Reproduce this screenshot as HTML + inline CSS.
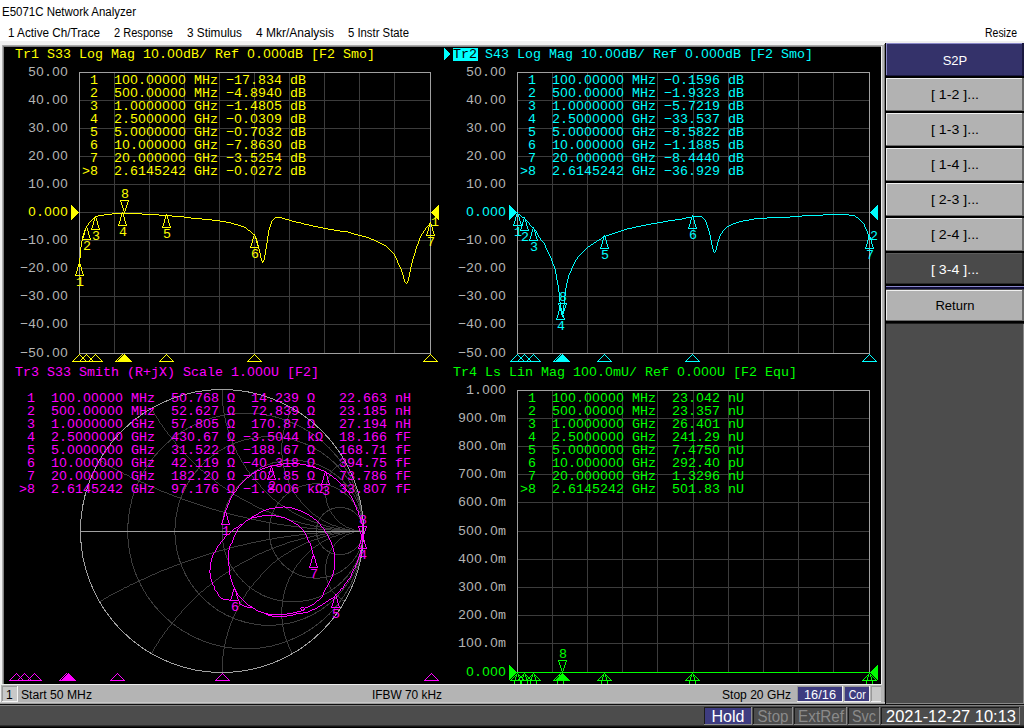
<!DOCTYPE html>
<html><head><meta charset="utf-8"><title>E5071C Network Analyzer</title>
<style>html,body{margin:0;padding:0;background:#fff;overflow:hidden}svg{display:block}text{font-family:'Liberation Mono',monospace;font-size:13.333px;white-space:pre}.s{font-family:"Liberation Sans",sans-serif;white-space:pre}.d{font-family:"Liberation Sans",sans-serif}.cr{shape-rendering:crispEdges}</style></head><body>
<svg width="1024" height="728" viewBox="0 0 1024 728">
<rect width="1024" height="728" fill="#ffffff"/>
<text class="s" x="2" y="16" fill="#000" style="font-size:12px" textLength="134" lengthAdjust="spacingAndGlyphs">E5071C Network Analyzer</text>
<text class="s" x="8" y="37" fill="#000" style="font-size:12px" textLength="92" lengthAdjust="spacingAndGlyphs">1 Active Ch/Trace</text>
<text class="s" x="114" y="37" fill="#000" style="font-size:12px" textLength="59" lengthAdjust="spacingAndGlyphs">2 Response</text>
<text class="s" x="187" y="37" fill="#000" style="font-size:12px" textLength="55" lengthAdjust="spacingAndGlyphs">3 Stimulus</text>
<text class="s" x="256" y="37" fill="#000" style="font-size:12px" textLength="78" lengthAdjust="spacingAndGlyphs">4 Mkr/Analysis</text>
<text class="s" x="348" y="37" fill="#000" style="font-size:12px" textLength="61" lengthAdjust="spacingAndGlyphs">5 Instr State</text>
<text class="s" x="985" y="37" fill="#000" style="font-size:12px" textLength="32" lengthAdjust="spacingAndGlyphs">Resize</text>
<g class="cr">
<rect x="0" y="41" width="1024" height="4" fill="#f0f0f0"/>
<rect x="0" y="45" width="2" height="659" fill="#f0f0f0"/>
<rect x="2" y="45" width="882" height="1" fill="#a8a8a8"/>
<rect x="2" y="45" width="1" height="659" fill="#b0b0b0"/>
<rect x="3" y="46" width="879" height="1" fill="#808080"/>
<rect x="3" y="46" width="1" height="658" fill="#808080"/>
<rect x="4" y="47" width="877" height="637" fill="#000"/>
<rect x="881" y="46" width="1" height="657" fill="#f0f0f0"/>
<rect x="882" y="45" width="2" height="659" fill="#b4b4b4"/>
<rect x="884" y="44" width="1" height="660" fill="#7c7c7c"/>
<rect x="885" y="43" width="1" height="662" fill="#000"/>
</g>
<g class="cr">
<rect x="114" y="72" width="1" height="282" fill="#3c3c3c"/>
<rect x="149" y="72" width="1" height="282" fill="#3c3c3c"/>
<rect x="184" y="72" width="1" height="282" fill="#3c3c3c"/>
<rect x="219" y="72" width="1" height="282" fill="#3c3c3c"/>
<rect x="254" y="72" width="1" height="282" fill="#3c3c3c"/>
<rect x="289" y="72" width="1" height="282" fill="#3c3c3c"/>
<rect x="324" y="72" width="1" height="282" fill="#3c3c3c"/>
<rect x="359" y="72" width="1" height="282" fill="#3c3c3c"/>
<rect x="394" y="72" width="1" height="282" fill="#3c3c3c"/>
<rect x="79" y="100" width="352" height="1" fill="#3c3c3c"/>
<rect x="79" y="128" width="352" height="1" fill="#3c3c3c"/>
<rect x="79" y="156" width="352" height="1" fill="#3c3c3c"/>
<rect x="79" y="184" width="352" height="1" fill="#3c3c3c"/>
<rect x="79" y="212" width="352" height="1" fill="#3c3c3c"/>
<rect x="79" y="240" width="352" height="1" fill="#3c3c3c"/>
<rect x="79" y="268" width="352" height="1" fill="#3c3c3c"/>
<rect x="79" y="296" width="352" height="1" fill="#3c3c3c"/>
<rect x="79" y="324" width="352" height="1" fill="#3c3c3c"/>
<rect x="79" y="72" width="352" height="1" fill="#a0a0a0"/>
<rect x="79" y="353" width="352" height="1" fill="#a0a0a0"/>
<rect x="79" y="72" width="1" height="282" fill="#a0a0a0"/>
<rect x="430" y="72" width="1" height="282" fill="#a0a0a0"/>
</g>
<text y="76" fill="#b4b4b4" ><tspan x="28">5</tspan><tspan class="d" x="36.3">0</tspan><tspan x="44">.</tspan><tspan class="d" x="52.3 60.3">00</tspan></text>
<text y="104" fill="#b4b4b4" ><tspan x="28">4</tspan><tspan class="d" x="36.3">0</tspan><tspan x="44">.</tspan><tspan class="d" x="52.3 60.3">00</tspan></text>
<text y="132" fill="#b4b4b4" ><tspan x="28">3</tspan><tspan class="d" x="36.3">0</tspan><tspan x="44">.</tspan><tspan class="d" x="52.3 60.3">00</tspan></text>
<text y="160" fill="#b4b4b4" ><tspan x="28">2</tspan><tspan class="d" x="36.3">0</tspan><tspan x="44">.</tspan><tspan class="d" x="52.3 60.3">00</tspan></text>
<text y="188" fill="#b4b4b4" ><tspan x="28">1</tspan><tspan class="d" x="36.3">0</tspan><tspan x="44">.</tspan><tspan class="d" x="52.3 60.3">00</tspan></text>
<text y="216" fill="#ffff00" ><tspan class="d" x="28.3">0</tspan><tspan x="36">.</tspan><tspan class="d" x="44.3 52.3 60.3">000</tspan></text>
<text y="244" fill="#b4b4b4" ><tspan x="20">−1</tspan><tspan class="d" x="36.3">0</tspan><tspan x="44">.</tspan><tspan class="d" x="52.3 60.3">00</tspan></text>
<text y="272" fill="#b4b4b4" ><tspan x="20">−2</tspan><tspan class="d" x="36.3">0</tspan><tspan x="44">.</tspan><tspan class="d" x="52.3 60.3">00</tspan></text>
<text y="300" fill="#b4b4b4" ><tspan x="20">−3</tspan><tspan class="d" x="36.3">0</tspan><tspan x="44">.</tspan><tspan class="d" x="52.3 60.3">00</tspan></text>
<text y="328" fill="#b4b4b4" ><tspan x="20">−4</tspan><tspan class="d" x="36.3">0</tspan><tspan x="44">.</tspan><tspan class="d" x="52.3 60.3">00</tspan></text>
<text y="357" fill="#b4b4b4" ><tspan x="20">−5</tspan><tspan class="d" x="36.3">0</tspan><tspan x="44">.</tspan><tspan class="d" x="52.3 60.3">00</tspan></text>
<text y="58" fill="#ffff00" ><tspan x="15">Tr1 S33 Log Mag 1</tspan><tspan class="d" x="151.3">0</tspan><tspan x="159">.</tspan><tspan class="d" x="167.3 175.3">00</tspan><tspan x="183">dB/ Ref </tspan><tspan class="d" x="247.3">0</tspan><tspan x="255">.</tspan><tspan class="d" x="263.3 271.3 279.3">000</tspan><tspan x="287">dB [F2 Smo]</tspan></text>
<text y="84" fill="#ffff00" ><tspan x="82"> 1  1</tspan><tspan class="d" x="122.3 130.3">00</tspan><tspan x="138">.</tspan><tspan class="d" x="146.3 154.3 162.3 170.3 178.3">00000</tspan><tspan x="186"> MHz −17.834 dB</tspan></text>
<text y="97" fill="#ffff00" ><tspan x="82"> 2  5</tspan><tspan class="d" x="122.3 130.3">00</tspan><tspan x="138">.</tspan><tspan class="d" x="146.3 154.3 162.3 170.3 178.3">00000</tspan><tspan x="186"> MHz −4.894</tspan><tspan class="d" x="274.3">0</tspan><tspan x="282"> dB</tspan></text>
<text y="110" fill="#ffff00" ><tspan x="82"> 3  1.</tspan><tspan class="d" x="130.3 138.3 146.3 154.3 162.3 170.3 178.3">0000000</tspan><tspan x="186"> GHz −1.48</tspan><tspan class="d" x="266.3">0</tspan><tspan x="274">5 dB</tspan></text>
<text y="123" fill="#ffff00" ><tspan x="82"> 4  2.5</tspan><tspan class="d" x="138.3 146.3 154.3 162.3 170.3 178.3">000000</tspan><tspan x="186"> GHz −</tspan><tspan class="d" x="234.3">0</tspan><tspan x="242">.</tspan><tspan class="d" x="250.3">0</tspan><tspan x="258">3</tspan><tspan class="d" x="266.3">0</tspan><tspan x="274">9 dB</tspan></text>
<text y="136" fill="#ffff00" ><tspan x="82"> 5  5.</tspan><tspan class="d" x="130.3 138.3 146.3 154.3 162.3 170.3 178.3">0000000</tspan><tspan x="186"> GHz −</tspan><tspan class="d" x="234.3">0</tspan><tspan x="242">.7</tspan><tspan class="d" x="258.3">0</tspan><tspan x="266">32 dB</tspan></text>
<text y="149" fill="#ffff00" ><tspan x="82"> 6  1</tspan><tspan class="d" x="122.3">0</tspan><tspan x="130">.</tspan><tspan class="d" x="138.3 146.3 154.3 162.3 170.3 178.3">000000</tspan><tspan x="186"> GHz −7.863</tspan><tspan class="d" x="274.3">0</tspan><tspan x="282"> dB</tspan></text>
<text y="162" fill="#ffff00" ><tspan x="82"> 7  2</tspan><tspan class="d" x="122.3">0</tspan><tspan x="130">.</tspan><tspan class="d" x="138.3 146.3 154.3 162.3 170.3 178.3">000000</tspan><tspan x="186"> GHz −3.5254 dB</tspan></text>
<text y="175" fill="#ffff00" ><tspan x="82">&gt;8  2.6145242 GHz −</tspan><tspan class="d" x="234.3">0</tspan><tspan x="242">.</tspan><tspan class="d" x="250.3">0</tspan><tspan x="258">272 dB</tspan></text>
<g class="cr">
<path d="M112 213.5h30M104 214.5h8M142 214.5h17M98 215.5h6M159 215.5h13M96 216.5h2M172 216.5h12M94 217.5h2M184 217.5h7M275 217.5h7M93 218.5h1M191 218.5h11M274 218.5h1M282 218.5h3M92 219.5h1M202 219.5h10M273 219.5h1M285 219.5h4M91 220.5h1M212 220.5h8M272 220.5h1M289 220.5h3M90 221.5h1M220 221.5h6M271 221.5h1M292 221.5h4M89 222.5h1M226 222.5h5M271 222.5h1M296 222.5h5M430 222.5h1M88 223.5h1M231 223.5h3M271 223.5h1M301 223.5h3M429 223.5h1M88 224.5h1M234 224.5h4M270 224.5h1M304 224.5h5M429 224.5h1M87 225.5h1M238 225.5h3M270 225.5h1M309 225.5h4M428 225.5h1M86 226.5h1M241 226.5h3M270 226.5h1M313 226.5h5M427 226.5h1M86 227.5h1M244 227.5h2M269 227.5h1M318 227.5h5M426 227.5h1M85 228.5h1M246 228.5h1M269 228.5h1M323 228.5h5M425 228.5h1M85 229.5h1M247 229.5h1M269 229.5h1M328 229.5h6M425 229.5h1M84 230.5h1M248 230.5h2M268 230.5h1M334 230.5h6M424 230.5h1M84 231.5h1M250 231.5h1M268 231.5h1M340 231.5h8M423 231.5h1M84 232.5h1M251 232.5h1M268 232.5h1M348 232.5h3M423 232.5h1M83 233.5h1M252 233.5h1M268 233.5h1M351 233.5h3M422 233.5h1M83 234.5h1M253 234.5h1M268 234.5h1M354 234.5h4M421 234.5h1M83 235.5h1M254 235.5h1M268 235.5h1M358 235.5h4M421 235.5h1M82 236.5h1M255 236.5h1M267 236.5h1M362 236.5h4M420 236.5h1M82 237.5h1M255 237.5h1M267 237.5h1M366 237.5h3M420 237.5h1M82 238.5h1M256 238.5h1M267 238.5h1M369 238.5h2M419 238.5h1M82 239.5h1M256 239.5h1M267 239.5h1M371 239.5h3M419 239.5h1M82 240.5h1M256 240.5h1M267 240.5h1M374 240.5h2M419 240.5h1M81 241.5h1M257 241.5h1M267 241.5h1M376 241.5h2M418 241.5h1M81 242.5h1M257 242.5h1M267 242.5h1M378 242.5h2M418 242.5h1M81 243.5h1M257 243.5h1M266 243.5h1M380 243.5h2M418 243.5h1M81 244.5h1M257 244.5h1M266 244.5h1M382 244.5h2M417 244.5h1M81 245.5h1M258 245.5h1M266 245.5h1M384 245.5h2M417 245.5h1M81 246.5h1M258 246.5h1M266 246.5h1M386 246.5h1M416 246.5h1M80 247.5h1M258 247.5h1M266 247.5h1M387 247.5h1M416 247.5h1M80 248.5h1M258 248.5h1M266 248.5h1M388 248.5h1M416 248.5h1M80 249.5h1M259 249.5h1M265 249.5h1M389 249.5h1M415 249.5h1M80 250.5h1M259 250.5h1M265 250.5h1M390 250.5h1M415 250.5h1M80 251.5h1M259 251.5h1M265 251.5h1M391 251.5h1M415 251.5h1M80 252.5h1M259 252.5h1M265 252.5h1M392 252.5h1M415 252.5h1M80 253.5h1M260 253.5h1M265 253.5h1M393 253.5h1M414 253.5h1M80 254.5h1M260 254.5h1M265 254.5h1M394 254.5h1M414 254.5h1M80 255.5h1M260 255.5h1M264 255.5h1M394 255.5h1M414 255.5h1M80 256.5h1M260 256.5h1M264 256.5h1M395 256.5h1M413 256.5h1M80 257.5h1M260 257.5h1M264 257.5h1M395 257.5h1M413 257.5h1M79 258.5h1M261 258.5h1M264 258.5h1M396 258.5h1M413 258.5h1M79 259.5h1M261 259.5h1M264 259.5h1M396 259.5h1M412 259.5h1M79 260.5h1M261 260.5h1M263 260.5h1M397 260.5h1M412 260.5h1M79 261.5h1M262 261.5h2M397 261.5h1M412 261.5h1M79 262.5h1M262 262.5h1M397 262.5h1M412 262.5h1M79 263.5h1M398 263.5h1M411 263.5h1M79 264.5h1M398 264.5h1M411 264.5h1M79 265.5h1M399 265.5h1M411 265.5h1M79 266.5h1M399 266.5h1M411 266.5h1M400 267.5h1M410 267.5h1M400 268.5h1M410 268.5h1M401 269.5h1M410 269.5h1M401 270.5h1M410 270.5h1M401 271.5h1M410 271.5h1M402 272.5h1M409 272.5h1M402 273.5h1M409 273.5h1M402 274.5h1M409 274.5h1M403 275.5h1M409 275.5h1M403 276.5h1M409 276.5h1M403 277.5h1M408 277.5h1M403 278.5h1M408 278.5h1M404 279.5h1M408 279.5h1M404 280.5h1M408 280.5h1M404 281.5h1M407 281.5h1M405 282.5h1M407 282.5h1M406 283.5h1" stroke="#ffff00" stroke-width="1" fill="none"/>
</g>
<g class="cr">
<path d="M79 262.5h1M79 263.5h1M78 264.5h1M80 264.5h1M78 265.5h1M80 265.5h1M78 266.5h1M80 266.5h1M77 267.5h1M81 267.5h1M77 268.5h1M81 268.5h1M77 269.5h1M81 269.5h1M77 270.5h1M81 270.5h1M76 271.5h1M82 271.5h1M76 272.5h1M82 272.5h1M76 273.5h1M82 273.5h1M75 274.5h1M83 274.5h1M75 275.5h9" stroke="#ffff00" stroke-width="1" fill="none"/>
<path d="M86 226.5h1M86 227.5h1M85 228.5h1M87 228.5h1M85 229.5h1M87 229.5h1M85 230.5h1M87 230.5h1M84 231.5h1M88 231.5h1M84 232.5h1M88 232.5h1M84 233.5h1M88 233.5h1M84 234.5h1M88 234.5h1M83 235.5h1M89 235.5h1M83 236.5h1M89 236.5h1M83 237.5h1M89 237.5h1M82 238.5h1M90 238.5h1M82 239.5h9" stroke="#ffff00" stroke-width="1" fill="none"/>
<path d="M95 216.5h1M95 217.5h1M94 218.5h1M96 218.5h1M94 219.5h1M96 219.5h1M94 220.5h1M96 220.5h1M93 221.5h1M97 221.5h1M93 222.5h1M97 222.5h1M93 223.5h1M97 223.5h1M93 224.5h1M97 224.5h1M92 225.5h1M98 225.5h1M92 226.5h1M98 226.5h1M92 227.5h1M98 227.5h1M91 228.5h1M99 228.5h1M91 229.5h9" stroke="#ffff00" stroke-width="1" fill="none"/>
<path d="M122 212.5h1M122 213.5h1M121 214.5h1M123 214.5h1M121 215.5h1M123 215.5h1M121 216.5h1M123 216.5h1M120 217.5h1M124 217.5h1M120 218.5h1M124 218.5h1M120 219.5h1M124 219.5h1M120 220.5h1M124 220.5h1M119 221.5h1M125 221.5h1M119 222.5h1M125 222.5h1M119 223.5h1M125 223.5h1M118 224.5h1M126 224.5h1M118 225.5h9" stroke="#ffff00" stroke-width="1" fill="none"/>
<path d="M166 214.5h1M166 215.5h1M165 216.5h1M167 216.5h1M165 217.5h1M167 217.5h1M165 218.5h1M167 218.5h1M164 219.5h1M168 219.5h1M164 220.5h1M168 220.5h1M164 221.5h1M168 221.5h1M164 222.5h1M168 222.5h1M163 223.5h1M169 223.5h1M163 224.5h1M169 224.5h1M163 225.5h1M169 225.5h1M162 226.5h1M170 226.5h1M162 227.5h9" stroke="#ffff00" stroke-width="1" fill="none"/>
<path d="M254 234.5h1M254 235.5h1M253 236.5h1M255 236.5h1M253 237.5h1M255 237.5h1M253 238.5h1M255 238.5h1M252 239.5h1M256 239.5h1M252 240.5h1M256 240.5h1M252 241.5h1M256 241.5h1M252 242.5h1M256 242.5h1M251 243.5h1M257 243.5h1M251 244.5h1M257 244.5h1M251 245.5h1M257 245.5h1M250 246.5h1M258 246.5h1M250 247.5h9" stroke="#ffff00" stroke-width="1" fill="none"/>
<path d="M430 222.5h1M430 223.5h1M429 224.5h1M431 224.5h1M429 225.5h1M431 225.5h1M429 226.5h1M431 226.5h1M428 227.5h1M432 227.5h1M428 228.5h1M432 228.5h1M428 229.5h1M432 229.5h1M428 230.5h1M432 230.5h1M427 231.5h1M433 231.5h1M427 232.5h1M433 232.5h1M427 233.5h1M433 233.5h1M426 234.5h1M434 234.5h1M426 235.5h9" stroke="#ffff00" stroke-width="1" fill="none"/>
<path d="M120 200.5h9M120 201.5h1M128 201.5h1M121 202.5h1M127 202.5h1M121 203.5h1M127 203.5h1M121 204.5h1M127 204.5h1M122 205.5h1M126 205.5h1M122 206.5h1M126 206.5h1M122 207.5h1M126 207.5h1M123 208.5h1M125 208.5h1M123 209.5h1M125 209.5h1M123 210.5h1M125 210.5h1M124 211.5h1M124 212.5h1" stroke="#ffff00" stroke-width="1" fill="none"/>
</g>
<text y="286" fill="#ffff00" ><tspan x="76">1</tspan></text>
<text y="250" fill="#ffff00" ><tspan x="83">2</tspan></text>
<text y="240" fill="#ffff00" ><tspan x="92">3</tspan></text>
<text y="236" fill="#ffff00" ><tspan x="119">4</tspan></text>
<text y="238" fill="#ffff00" ><tspan x="163">5</tspan></text>
<text y="258" fill="#ffff00" ><tspan x="251">6</tspan></text>
<text y="246" fill="#ffff00" ><tspan x="427">7</tspan></text>
<text y="198" fill="#ffff00" ><tspan x="121">8</tspan></text>
<g class="cr">
<path d="M79 354.5h1M78 355.5h1M80 355.5h1M77 356.5h1M81 356.5h1M76 357.5h1M82 357.5h1M75 358.5h1M83 358.5h1M74 359.5h1M84 359.5h1M73 360.5h1M85 360.5h1M72 361.5h15" stroke="#ffff00" stroke-width="1" fill="none"/>
<path d="M86 354.5h1M85 355.5h1M87 355.5h1M84 356.5h1M88 356.5h1M83 357.5h1M89 357.5h1M82 358.5h1M90 358.5h1M81 359.5h1M91 359.5h1M80 360.5h1M92 360.5h1M79 361.5h15" stroke="#ffff00" stroke-width="1" fill="none"/>
<path d="M95 354.5h1M94 355.5h1M96 355.5h1M93 356.5h1M97 356.5h1M92 357.5h1M98 357.5h1M91 358.5h1M99 358.5h1M90 359.5h1M100 359.5h1M89 360.5h1M101 360.5h1M88 361.5h15" stroke="#ffff00" stroke-width="1" fill="none"/>
<path d="M122 354.5h1M121 355.5h1M123 355.5h1M120 356.5h1M124 356.5h1M119 357.5h1M125 357.5h1M118 358.5h1M126 358.5h1M117 359.5h1M127 359.5h1M116 360.5h1M128 360.5h1M115 361.5h15" stroke="#ffff00" stroke-width="1" fill="none"/>
<path d="M166 354.5h1M165 355.5h1M167 355.5h1M164 356.5h1M168 356.5h1M163 357.5h1M169 357.5h1M162 358.5h1M170 358.5h1M161 359.5h1M171 359.5h1M160 360.5h1M172 360.5h1M159 361.5h15" stroke="#ffff00" stroke-width="1" fill="none"/>
<path d="M254 354.5h1M253 355.5h1M255 355.5h1M252 356.5h1M256 356.5h1M251 357.5h1M257 357.5h1M250 358.5h1M258 358.5h1M249 359.5h1M259 359.5h1M248 360.5h1M260 360.5h1M247 361.5h15" stroke="#ffff00" stroke-width="1" fill="none"/>
<path d="M430 354.5h1M429 355.5h1M431 355.5h1M428 356.5h1M432 356.5h1M427 357.5h1M433 357.5h1M426 358.5h1M434 358.5h1M425 359.5h1M435 359.5h1M424 360.5h1M436 360.5h1M423 361.5h15" stroke="#ffff00" stroke-width="1" fill="none"/>
<path d="M124.5 354.5 L117.5 361.5 L131.5 361.5 Z" fill="#ffff00" stroke="#ffff00" stroke-width="1" stroke-linejoin="bevel"/>
</g>
<g class="cr">
<path d="M71 205.5h1M71 206.5h2M71 207.5h3M71 208.5h4M71 209.5h5M71 210.5h6M71 211.5h7M71 212.5h8M71 213.5h7M71 214.5h6M71 215.5h5M71 216.5h4M71 217.5h3M71 218.5h2M71 219.5h1" stroke="#ffff00" stroke-width="1" fill="none"/>
</g>
<g class="cr">
<path d="M438 205.5h1M437 206.5h2M436 207.5h3M435 208.5h4M434 209.5h5M433 210.5h6M432 211.5h7M431 212.5h8M432 213.5h7M433 214.5h6M434 215.5h5M435 216.5h4M436 217.5h3M437 218.5h2M438 219.5h1" stroke="#ffff00" stroke-width="1" fill="none"/>
</g>
<text y="226" fill="#ffff00" ><tspan x="431">1</tspan></text>
<g class="cr">
<rect x="552" y="72" width="1" height="282" fill="#3c3c3c"/>
<rect x="587" y="72" width="1" height="282" fill="#3c3c3c"/>
<rect x="622" y="72" width="1" height="282" fill="#3c3c3c"/>
<rect x="657" y="72" width="1" height="282" fill="#3c3c3c"/>
<rect x="693" y="72" width="1" height="282" fill="#3c3c3c"/>
<rect x="728" y="72" width="1" height="282" fill="#3c3c3c"/>
<rect x="763" y="72" width="1" height="282" fill="#3c3c3c"/>
<rect x="798" y="72" width="1" height="282" fill="#3c3c3c"/>
<rect x="833" y="72" width="1" height="282" fill="#3c3c3c"/>
<rect x="517" y="100" width="353" height="1" fill="#3c3c3c"/>
<rect x="517" y="128" width="353" height="1" fill="#3c3c3c"/>
<rect x="517" y="156" width="353" height="1" fill="#3c3c3c"/>
<rect x="517" y="184" width="353" height="1" fill="#3c3c3c"/>
<rect x="517" y="212" width="353" height="1" fill="#3c3c3c"/>
<rect x="517" y="240" width="353" height="1" fill="#3c3c3c"/>
<rect x="517" y="268" width="353" height="1" fill="#3c3c3c"/>
<rect x="517" y="296" width="353" height="1" fill="#3c3c3c"/>
<rect x="517" y="324" width="353" height="1" fill="#3c3c3c"/>
<rect x="517" y="72" width="353" height="1" fill="#a0a0a0"/>
<rect x="517" y="353" width="353" height="1" fill="#a0a0a0"/>
<rect x="517" y="72" width="1" height="282" fill="#a0a0a0"/>
<rect x="869" y="72" width="1" height="282" fill="#a0a0a0"/>
</g>
<text y="76" fill="#b4b4b4" ><tspan x="466">5</tspan><tspan class="d" x="474.3">0</tspan><tspan x="482">.</tspan><tspan class="d" x="490.3 498.3">00</tspan></text>
<text y="104" fill="#b4b4b4" ><tspan x="466">4</tspan><tspan class="d" x="474.3">0</tspan><tspan x="482">.</tspan><tspan class="d" x="490.3 498.3">00</tspan></text>
<text y="132" fill="#b4b4b4" ><tspan x="466">3</tspan><tspan class="d" x="474.3">0</tspan><tspan x="482">.</tspan><tspan class="d" x="490.3 498.3">00</tspan></text>
<text y="160" fill="#b4b4b4" ><tspan x="466">2</tspan><tspan class="d" x="474.3">0</tspan><tspan x="482">.</tspan><tspan class="d" x="490.3 498.3">00</tspan></text>
<text y="188" fill="#b4b4b4" ><tspan x="466">1</tspan><tspan class="d" x="474.3">0</tspan><tspan x="482">.</tspan><tspan class="d" x="490.3 498.3">00</tspan></text>
<text y="216" fill="#00ffff" ><tspan class="d" x="466.3">0</tspan><tspan x="474">.</tspan><tspan class="d" x="482.3 490.3 498.3">000</tspan></text>
<text y="244" fill="#b4b4b4" ><tspan x="458">−1</tspan><tspan class="d" x="474.3">0</tspan><tspan x="482">.</tspan><tspan class="d" x="490.3 498.3">00</tspan></text>
<text y="272" fill="#b4b4b4" ><tspan x="458">−2</tspan><tspan class="d" x="474.3">0</tspan><tspan x="482">.</tspan><tspan class="d" x="490.3 498.3">00</tspan></text>
<text y="300" fill="#b4b4b4" ><tspan x="458">−3</tspan><tspan class="d" x="474.3">0</tspan><tspan x="482">.</tspan><tspan class="d" x="490.3 498.3">00</tspan></text>
<text y="328" fill="#b4b4b4" ><tspan x="458">−4</tspan><tspan class="d" x="474.3">0</tspan><tspan x="482">.</tspan><tspan class="d" x="490.3 498.3">00</tspan></text>
<text y="357" fill="#b4b4b4" ><tspan x="458">−5</tspan><tspan class="d" x="474.3">0</tspan><tspan x="482">.</tspan><tspan class="d" x="490.3 498.3">00</tspan></text>
<g class="cr">
<path d="M444 48.5h1M444 49.5h2M444 50.5h3M444 51.5h4M444 52.5h5M444 53.5h6M444 54.5h6M444 55.5h5M444 56.5h4M444 57.5h3M444 58.5h2M444 59.5h1" stroke="#00ffff" stroke-width="1" fill="none"/>
</g>
<rect x="453" y="48" width="25" height="13" fill="#00ffff" class="cr"/>
<text y="58" fill="#000" ><tspan x="453">Tr2</tspan></text>
<text y="58" fill="#00ffff" ><tspan x="485">S43 Log Mag 1</tspan><tspan class="d" x="589.3">0</tspan><tspan x="597">.</tspan><tspan class="d" x="605.3 613.3">00</tspan><tspan x="621">dB/ Ref </tspan><tspan class="d" x="685.3">0</tspan><tspan x="693">.</tspan><tspan class="d" x="701.3 709.3 717.3">000</tspan><tspan x="725">dB [F2 Smo]</tspan></text>
<text y="84" fill="#00ffff" ><tspan x="520"> 1  1</tspan><tspan class="d" x="560.3 568.3">00</tspan><tspan x="576">.</tspan><tspan class="d" x="584.3 592.3 600.3 608.3 616.3">00000</tspan><tspan x="624"> MHz −</tspan><tspan class="d" x="672.3">0</tspan><tspan x="680">.1596 dB</tspan></text>
<text y="97" fill="#00ffff" ><tspan x="520"> 2  5</tspan><tspan class="d" x="560.3 568.3">00</tspan><tspan x="576">.</tspan><tspan class="d" x="584.3 592.3 600.3 608.3 616.3">00000</tspan><tspan x="624"> MHz −1.9323 dB</tspan></text>
<text y="110" fill="#00ffff" ><tspan x="520"> 3  1.</tspan><tspan class="d" x="568.3 576.3 584.3 592.3 600.3 608.3 616.3">0000000</tspan><tspan x="624"> GHz −5.7219 dB</tspan></text>
<text y="123" fill="#00ffff" ><tspan x="520"> 4  2.5</tspan><tspan class="d" x="576.3 584.3 592.3 600.3 608.3 616.3">000000</tspan><tspan x="624"> GHz −33.537 dB</tspan></text>
<text y="136" fill="#00ffff" ><tspan x="520"> 5  5.</tspan><tspan class="d" x="568.3 576.3 584.3 592.3 600.3 608.3 616.3">0000000</tspan><tspan x="624"> GHz −8.5822 dB</tspan></text>
<text y="149" fill="#00ffff" ><tspan x="520"> 6  1</tspan><tspan class="d" x="560.3">0</tspan><tspan x="568">.</tspan><tspan class="d" x="576.3 584.3 592.3 600.3 608.3 616.3">000000</tspan><tspan x="624"> GHz −1.1885 dB</tspan></text>
<text y="162" fill="#00ffff" ><tspan x="520"> 7  2</tspan><tspan class="d" x="560.3">0</tspan><tspan x="568">.</tspan><tspan class="d" x="576.3 584.3 592.3 600.3 608.3 616.3">000000</tspan><tspan x="624"> GHz −8.444</tspan><tspan class="d" x="712.3">0</tspan><tspan x="720"> dB</tspan></text>
<text y="175" fill="#00ffff" ><tspan x="520">&gt;8  2.6145242 GHz −36.929 dB</tspan></text>
<g class="cr">
<path d="M517 213.5h1M518 214.5h2M823 214.5h26M520 215.5h1M802 215.5h21M849 215.5h6M521 216.5h1M692 216.5h10M790 216.5h12M855 216.5h1M522 217.5h2M686 217.5h6M702 217.5h1M767 217.5h23M856 217.5h2M524 218.5h1M682 218.5h4M703 218.5h1M754 218.5h13M858 218.5h1M525 219.5h1M675 219.5h7M704 219.5h1M749 219.5h5M859 219.5h1M526 220.5h1M668 220.5h7M705 220.5h1M743 220.5h6M860 220.5h1M527 221.5h1M663 221.5h5M705 221.5h1M739 221.5h4M861 221.5h1M528 222.5h1M657 222.5h6M706 222.5h1M736 222.5h3M862 222.5h1M529 223.5h1M651 223.5h6M706 223.5h1M733 223.5h3M863 223.5h1M529 224.5h1M646 224.5h5M706 224.5h1M731 224.5h2M864 224.5h1M530 225.5h1M641 225.5h5M707 225.5h1M729 225.5h2M864 225.5h1M531 226.5h1M636 226.5h5M707 226.5h1M727 226.5h2M864 226.5h1M532 227.5h1M632 227.5h4M707 227.5h1M726 227.5h1M865 227.5h1M533 228.5h1M627 228.5h5M708 228.5h1M725 228.5h1M865 228.5h1M534 229.5h1M624 229.5h3M708 229.5h1M724 229.5h1M866 229.5h1M535 230.5h1M621 230.5h3M708 230.5h1M723 230.5h1M866 230.5h1M536 231.5h1M618 231.5h3M709 231.5h1M722 231.5h1M867 231.5h1M536 232.5h1M615 232.5h3M709 232.5h1M722 232.5h1M867 232.5h1M537 233.5h1M612 233.5h3M709 233.5h1M721 233.5h1M867 233.5h1M537 234.5h1M609 234.5h3M709 234.5h1M720 234.5h1M868 234.5h1M538 235.5h1M606 235.5h3M710 235.5h1M720 235.5h1M868 235.5h1M538 236.5h1M603 236.5h3M710 236.5h1M719 236.5h1M868 236.5h1M539 237.5h1M602 237.5h1M710 237.5h1M719 237.5h1M868 237.5h1M540 238.5h1M601 238.5h1M710 238.5h1M719 238.5h1M869 238.5h1M540 239.5h1M599 239.5h2M710 239.5h1M718 239.5h1M541 240.5h1M597 240.5h2M711 240.5h1M718 240.5h1M542 241.5h1M596 241.5h1M711 241.5h1M718 241.5h1M543 242.5h1M594 242.5h2M711 242.5h1M717 242.5h1M544 243.5h1M593 243.5h1M711 243.5h1M717 243.5h1M544 244.5h1M591 244.5h2M711 244.5h1M717 244.5h1M545 245.5h1M590 245.5h1M712 245.5h1M717 245.5h1M545 246.5h1M588 246.5h2M712 246.5h1M716 246.5h1M545 247.5h1M587 247.5h1M712 247.5h1M716 247.5h1M546 248.5h1M586 248.5h1M712 248.5h1M716 248.5h1M546 249.5h1M585 249.5h1M713 249.5h1M716 249.5h1M547 250.5h1M584 250.5h1M713 250.5h1M715 250.5h1M547 251.5h1M583 251.5h1M713 251.5h1M715 251.5h1M548 252.5h1M582 252.5h1M714 252.5h1M548 253.5h1M581 253.5h1M549 254.5h1M580 254.5h1M549 255.5h1M579 255.5h1M550 256.5h1M578 256.5h1M550 257.5h1M577 257.5h1M551 258.5h1M577 258.5h1M551 259.5h1M576 259.5h1M551 260.5h1M575 260.5h1M552 261.5h1M575 261.5h1M552 262.5h1M574 262.5h1M552 263.5h1M574 263.5h1M553 264.5h1M573 264.5h1M553 265.5h1M573 265.5h1M554 266.5h1M572 266.5h1M554 267.5h1M572 267.5h1M554 268.5h1M571 268.5h1M555 269.5h1M571 269.5h1M555 270.5h1M571 270.5h1M555 271.5h1M570 271.5h1M555 272.5h1M570 272.5h1M555 273.5h1M569 273.5h1M556 274.5h1M569 274.5h1M556 275.5h1M568 275.5h1M556 276.5h1M568 276.5h1M556 277.5h1M568 277.5h1M556 278.5h1M568 278.5h1M556 279.5h1M567 279.5h1M557 280.5h1M567 280.5h1M557 281.5h1M567 281.5h1M557 282.5h1M567 282.5h1M557 283.5h1M566 283.5h1M557 284.5h1M566 284.5h1M558 285.5h1M566 285.5h1M558 286.5h1M566 286.5h1M558 287.5h1M566 287.5h1M558 288.5h1M565 288.5h1M558 289.5h1M565 289.5h1M558 290.5h1M565 290.5h1M558 291.5h1M565 291.5h1M559 292.5h1M565 292.5h1M559 293.5h1M565 293.5h1M559 294.5h1M565 294.5h1M559 295.5h1M565 295.5h1M559 296.5h1M564 296.5h1M559 297.5h1M564 297.5h1M559 298.5h1M564 298.5h1M559 299.5h1M564 299.5h1M559 300.5h1M564 300.5h1M559 301.5h1M564 301.5h1M560 302.5h1M564 302.5h1M560 303.5h1M564 303.5h1M560 304.5h1M564 304.5h1M560 305.5h1M563 305.5h1M560 306.5h1M563 306.5h1M560 307.5h1M563 307.5h1M560 308.5h1M563 308.5h1M560 309.5h1M563 309.5h1M561 310.5h1M563 310.5h1M561 311.5h1M563 311.5h1M561 312.5h1M563 312.5h1M561 313.5h2M561 314.5h2M562 315.5h1M562 316.5h1" stroke="#00ffff" stroke-width="1" fill="none"/>
</g>
<g class="cr">
<path d="M517 212.5h1M517 213.5h1M516 214.5h1M518 214.5h1M516 215.5h1M518 215.5h1M516 216.5h1M518 216.5h1M515 217.5h1M519 217.5h1M515 218.5h1M519 218.5h1M515 219.5h1M519 219.5h1M515 220.5h1M519 220.5h1M514 221.5h1M520 221.5h1M514 222.5h1M520 222.5h1M514 223.5h1M520 223.5h1M513 224.5h1M521 224.5h1M513 225.5h9" stroke="#00ffff" stroke-width="1" fill="none"/>
<path d="M524 217.5h1M524 218.5h1M523 219.5h1M525 219.5h1M523 220.5h1M525 220.5h1M523 221.5h1M525 221.5h1M522 222.5h1M526 222.5h1M522 223.5h1M526 223.5h1M522 224.5h1M526 224.5h1M522 225.5h1M526 225.5h1M521 226.5h1M527 226.5h1M521 227.5h1M527 227.5h1M521 228.5h1M527 228.5h1M520 229.5h1M528 229.5h1M520 230.5h9" stroke="#00ffff" stroke-width="1" fill="none"/>
<path d="M533 227.5h1M533 228.5h1M532 229.5h1M534 229.5h1M532 230.5h1M534 230.5h1M532 231.5h1M534 231.5h1M531 232.5h1M535 232.5h1M531 233.5h1M535 233.5h1M531 234.5h1M535 234.5h1M531 235.5h1M535 235.5h1M530 236.5h1M536 236.5h1M530 237.5h1M536 237.5h1M530 238.5h1M536 238.5h1M529 239.5h1M537 239.5h1M529 240.5h9" stroke="#00ffff" stroke-width="1" fill="none"/>
<path d="M560 306.5h1M560 307.5h1M559 308.5h1M561 308.5h1M559 309.5h1M561 309.5h1M559 310.5h1M561 310.5h1M558 311.5h1M562 311.5h1M558 312.5h1M562 312.5h1M558 313.5h1M562 313.5h1M558 314.5h1M562 314.5h1M557 315.5h1M563 315.5h1M557 316.5h1M563 316.5h1M557 317.5h1M563 317.5h1M556 318.5h1M564 318.5h1M556 319.5h9" stroke="#00ffff" stroke-width="1" fill="none"/>
<path d="M604 235.5h1M604 236.5h1M603 237.5h1M605 237.5h1M603 238.5h1M605 238.5h1M603 239.5h1M605 239.5h1M602 240.5h1M606 240.5h1M602 241.5h1M606 241.5h1M602 242.5h1M606 242.5h1M602 243.5h1M606 243.5h1M601 244.5h1M607 244.5h1M601 245.5h1M607 245.5h1M601 246.5h1M607 246.5h1M600 247.5h1M608 247.5h1M600 248.5h9" stroke="#00ffff" stroke-width="1" fill="none"/>
<path d="M692 215.5h1M692 216.5h1M691 217.5h1M693 217.5h1M691 218.5h1M693 218.5h1M691 219.5h1M693 219.5h1M690 220.5h1M694 220.5h1M690 221.5h1M694 221.5h1M690 222.5h1M694 222.5h1M690 223.5h1M694 223.5h1M689 224.5h1M695 224.5h1M689 225.5h1M695 225.5h1M689 226.5h1M695 226.5h1M688 227.5h1M696 227.5h1M688 228.5h9" stroke="#00ffff" stroke-width="1" fill="none"/>
<path d="M869 235.5h1M869 236.5h1M868 237.5h1M870 237.5h1M868 238.5h1M870 238.5h1M868 239.5h1M870 239.5h1M867 240.5h1M871 240.5h1M867 241.5h1M871 241.5h1M867 242.5h1M871 242.5h1M867 243.5h1M871 243.5h1M866 244.5h1M872 244.5h1M866 245.5h1M872 245.5h1M866 246.5h1M872 246.5h1M865 247.5h1M873 247.5h1M865 248.5h9" stroke="#00ffff" stroke-width="1" fill="none"/>
<path d="M558 303.5h9M558 304.5h1M566 304.5h1M559 305.5h1M565 305.5h1M559 306.5h1M565 306.5h1M559 307.5h1M565 307.5h1M560 308.5h1M564 308.5h1M560 309.5h1M564 309.5h1M560 310.5h1M564 310.5h1M561 311.5h1M563 311.5h1M561 312.5h1M563 312.5h1M561 313.5h1M563 313.5h1M562 314.5h1M562 315.5h1" stroke="#00ffff" stroke-width="1" fill="none"/>
</g>
<text y="236" fill="#00ffff" ><tspan x="514">1</tspan></text>
<text y="241" fill="#00ffff" ><tspan x="521">2</tspan></text>
<text y="251" fill="#00ffff" ><tspan x="530">3</tspan></text>
<text y="330" fill="#00ffff" ><tspan x="557">4</tspan></text>
<text y="259" fill="#00ffff" ><tspan x="601">5</tspan></text>
<text y="239" fill="#00ffff" ><tspan x="689">6</tspan></text>
<text y="259" fill="#00ffff" ><tspan x="866">7</tspan></text>
<text y="301" fill="#00ffff" ><tspan x="559">8</tspan></text>
<g class="cr">
<path d="M517 354.5h1M516 355.5h1M518 355.5h1M515 356.5h1M519 356.5h1M514 357.5h1M520 357.5h1M513 358.5h1M521 358.5h1M512 359.5h1M522 359.5h1M511 360.5h1M523 360.5h1M510 361.5h15" stroke="#00ffff" stroke-width="1" fill="none"/>
<path d="M524 354.5h1M523 355.5h1M525 355.5h1M522 356.5h1M526 356.5h1M521 357.5h1M527 357.5h1M520 358.5h1M528 358.5h1M519 359.5h1M529 359.5h1M518 360.5h1M530 360.5h1M517 361.5h15" stroke="#00ffff" stroke-width="1" fill="none"/>
<path d="M533 354.5h1M532 355.5h1M534 355.5h1M531 356.5h1M535 356.5h1M530 357.5h1M536 357.5h1M529 358.5h1M537 358.5h1M528 359.5h1M538 359.5h1M527 360.5h1M539 360.5h1M526 361.5h15" stroke="#00ffff" stroke-width="1" fill="none"/>
<path d="M560 354.5h1M559 355.5h1M561 355.5h1M558 356.5h1M562 356.5h1M557 357.5h1M563 357.5h1M556 358.5h1M564 358.5h1M555 359.5h1M565 359.5h1M554 360.5h1M566 360.5h1M553 361.5h15" stroke="#00ffff" stroke-width="1" fill="none"/>
<path d="M604 354.5h1M603 355.5h1M605 355.5h1M602 356.5h1M606 356.5h1M601 357.5h1M607 357.5h1M600 358.5h1M608 358.5h1M599 359.5h1M609 359.5h1M598 360.5h1M610 360.5h1M597 361.5h15" stroke="#00ffff" stroke-width="1" fill="none"/>
<path d="M692 354.5h1M691 355.5h1M693 355.5h1M690 356.5h1M694 356.5h1M689 357.5h1M695 357.5h1M688 358.5h1M696 358.5h1M687 359.5h1M697 359.5h1M686 360.5h1M698 360.5h1M685 361.5h15" stroke="#00ffff" stroke-width="1" fill="none"/>
<path d="M869 354.5h1M868 355.5h1M870 355.5h1M867 356.5h1M871 356.5h1M866 357.5h1M872 357.5h1M865 358.5h1M873 358.5h1M864 359.5h1M874 359.5h1M863 360.5h1M875 360.5h1M862 361.5h15" stroke="#00ffff" stroke-width="1" fill="none"/>
<path d="M562.5 354.5 L555.5 361.5 L569.5 361.5 Z" fill="#00ffff" stroke="#00ffff" stroke-width="1" stroke-linejoin="bevel"/>
</g>
<g class="cr">
<path d="M509 205.5h1M509 206.5h2M509 207.5h3M509 208.5h4M509 209.5h5M509 210.5h6M509 211.5h7M509 212.5h8M509 213.5h7M509 214.5h6M509 215.5h5M509 216.5h4M509 217.5h3M509 218.5h2M509 219.5h1" stroke="#00ffff" stroke-width="1" fill="none"/>
</g>
<g class="cr">
<path d="M877 205.5h1M876 206.5h2M875 207.5h3M874 208.5h4M873 209.5h5M872 210.5h6M871 211.5h7M870 212.5h8M871 213.5h7M872 214.5h6M873 215.5h5M874 216.5h4M875 217.5h3M876 218.5h2M877 219.5h1" stroke="#00ffff" stroke-width="1" fill="none"/>
</g>
<text y="240" fill="#00ffff" ><tspan x="870">2</tspan></text>
<g class="cr">
<rect x="552" y="390" width="1" height="283" fill="#3c3c3c"/>
<rect x="587" y="390" width="1" height="283" fill="#3c3c3c"/>
<rect x="622" y="390" width="1" height="283" fill="#3c3c3c"/>
<rect x="657" y="390" width="1" height="283" fill="#3c3c3c"/>
<rect x="693" y="390" width="1" height="283" fill="#3c3c3c"/>
<rect x="728" y="390" width="1" height="283" fill="#3c3c3c"/>
<rect x="763" y="390" width="1" height="283" fill="#3c3c3c"/>
<rect x="798" y="390" width="1" height="283" fill="#3c3c3c"/>
<rect x="833" y="390" width="1" height="283" fill="#3c3c3c"/>
<rect x="517" y="418" width="353" height="1" fill="#3c3c3c"/>
<rect x="517" y="446" width="353" height="1" fill="#3c3c3c"/>
<rect x="517" y="474" width="353" height="1" fill="#3c3c3c"/>
<rect x="517" y="502" width="353" height="1" fill="#3c3c3c"/>
<rect x="517" y="531" width="353" height="1" fill="#3c3c3c"/>
<rect x="517" y="559" width="353" height="1" fill="#3c3c3c"/>
<rect x="517" y="587" width="353" height="1" fill="#3c3c3c"/>
<rect x="517" y="615" width="353" height="1" fill="#3c3c3c"/>
<rect x="517" y="643" width="353" height="1" fill="#3c3c3c"/>
<rect x="517" y="390" width="353" height="1" fill="#a0a0a0"/>
<rect x="517" y="672" width="353" height="1" fill="#a0a0a0"/>
<rect x="517" y="390" width="1" height="283" fill="#a0a0a0"/>
<rect x="869" y="390" width="1" height="283" fill="#a0a0a0"/>
</g>
<text y="394" fill="#b4b4b4" ><tspan x="466">1.</tspan><tspan class="d" x="482.3 490.3 498.3">000</tspan></text>
<text y="422" fill="#b4b4b4" ><tspan x="458">9</tspan><tspan class="d" x="466.3 474.3">00</tspan><tspan x="482">.</tspan><tspan class="d" x="490.3">0</tspan><tspan x="498">m</tspan></text>
<text y="450" fill="#b4b4b4" ><tspan x="458">8</tspan><tspan class="d" x="466.3 474.3">00</tspan><tspan x="482">.</tspan><tspan class="d" x="490.3">0</tspan><tspan x="498">m</tspan></text>
<text y="478" fill="#b4b4b4" ><tspan x="458">7</tspan><tspan class="d" x="466.3 474.3">00</tspan><tspan x="482">.</tspan><tspan class="d" x="490.3">0</tspan><tspan x="498">m</tspan></text>
<text y="506" fill="#b4b4b4" ><tspan x="458">6</tspan><tspan class="d" x="466.3 474.3">00</tspan><tspan x="482">.</tspan><tspan class="d" x="490.3">0</tspan><tspan x="498">m</tspan></text>
<text y="535" fill="#b4b4b4" ><tspan x="458">5</tspan><tspan class="d" x="466.3 474.3">00</tspan><tspan x="482">.</tspan><tspan class="d" x="490.3">0</tspan><tspan x="498">m</tspan></text>
<text y="563" fill="#b4b4b4" ><tspan x="458">4</tspan><tspan class="d" x="466.3 474.3">00</tspan><tspan x="482">.</tspan><tspan class="d" x="490.3">0</tspan><tspan x="498">m</tspan></text>
<text y="591" fill="#b4b4b4" ><tspan x="458">3</tspan><tspan class="d" x="466.3 474.3">00</tspan><tspan x="482">.</tspan><tspan class="d" x="490.3">0</tspan><tspan x="498">m</tspan></text>
<text y="619" fill="#b4b4b4" ><tspan x="458">2</tspan><tspan class="d" x="466.3 474.3">00</tspan><tspan x="482">.</tspan><tspan class="d" x="490.3">0</tspan><tspan x="498">m</tspan></text>
<text y="647" fill="#b4b4b4" ><tspan x="458">1</tspan><tspan class="d" x="466.3 474.3">00</tspan><tspan x="482">.</tspan><tspan class="d" x="490.3">0</tspan><tspan x="498">m</tspan></text>
<text y="676" fill="#00ff00" ><tspan class="d" x="466.3">0</tspan><tspan x="474">.</tspan><tspan class="d" x="482.3 490.3 498.3">000</tspan></text>
<text y="376" fill="#00ff00" ><tspan x="453">Tr4 Ls Lin Mag 1</tspan><tspan class="d" x="581.3 589.3">00</tspan><tspan x="597">.</tspan><tspan class="d" x="605.3">0</tspan><tspan x="613">mU/ Ref </tspan><tspan class="d" x="677.3">0</tspan><tspan x="685">.</tspan><tspan class="d" x="693.3 701.3 709.3">000</tspan><tspan x="717">U [F2 Equ]</tspan></text>
<text y="402" fill="#00ff00" ><tspan x="520"> 1  1</tspan><tspan class="d" x="560.3 568.3">00</tspan><tspan x="576">.</tspan><tspan class="d" x="584.3 592.3 600.3 608.3 616.3">00000</tspan><tspan x="624"> MHz  23.</tspan><tspan class="d" x="696.3">0</tspan><tspan x="704">42 nU</tspan></text>
<text y="415" fill="#00ff00" ><tspan x="520"> 2  5</tspan><tspan class="d" x="560.3 568.3">00</tspan><tspan x="576">.</tspan><tspan class="d" x="584.3 592.3 600.3 608.3 616.3">00000</tspan><tspan x="624"> MHz  23.357 nU</tspan></text>
<text y="428" fill="#00ff00" ><tspan x="520"> 3  1.</tspan><tspan class="d" x="568.3 576.3 584.3 592.3 600.3 608.3 616.3">0000000</tspan><tspan x="624"> GHz  26.4</tspan><tspan class="d" x="704.3">0</tspan><tspan x="712">1 nU</tspan></text>
<text y="441" fill="#00ff00" ><tspan x="520"> 4  2.5</tspan><tspan class="d" x="576.3 584.3 592.3 600.3 608.3 616.3">000000</tspan><tspan x="624"> GHz  241.29 nU</tspan></text>
<text y="454" fill="#00ff00" ><tspan x="520"> 5  5.</tspan><tspan class="d" x="568.3 576.3 584.3 592.3 600.3 608.3 616.3">0000000</tspan><tspan x="624"> GHz  7.475</tspan><tspan class="d" x="712.3">0</tspan><tspan x="720"> nU</tspan></text>
<text y="467" fill="#00ff00" ><tspan x="520"> 6  1</tspan><tspan class="d" x="560.3">0</tspan><tspan x="568">.</tspan><tspan class="d" x="576.3 584.3 592.3 600.3 608.3 616.3">000000</tspan><tspan x="624"> GHz  292.4</tspan><tspan class="d" x="712.3">0</tspan><tspan x="720"> pU</tspan></text>
<text y="480" fill="#00ff00" ><tspan x="520"> 7  2</tspan><tspan class="d" x="560.3">0</tspan><tspan x="568">.</tspan><tspan class="d" x="576.3 584.3 592.3 600.3 608.3 616.3">000000</tspan><tspan x="624"> GHz  1.3296 nU</tspan></text>
<text y="493" fill="#00ff00" ><tspan x="520">&gt;8  2.6145242 GHz  5</tspan><tspan class="d" x="680.3">0</tspan><tspan x="688">1.83 nU</tspan></text>
<g class="cr">
<rect x="517" y="672" width="353" height="1" fill="#00ff00"/>
<clipPath id="c4"><rect x="4" y="47" width="877" height="637"/></clipPath>
<g clip-path="url(#c4)">
<path d="M517 672.5h1M517 673.5h1M516 674.5h1M518 674.5h1M516 675.5h1M518 675.5h1M516 676.5h1M518 676.5h1M515 677.5h1M519 677.5h1M515 678.5h1M519 678.5h1M515 679.5h1M519 679.5h1M515 680.5h1M519 680.5h1M514 681.5h1M520 681.5h1M514 682.5h1M520 682.5h1M514 683.5h1M520 683.5h1M513 684.5h1M521 684.5h1M513 685.5h9" stroke="#00ff00" stroke-width="1" fill="none"/>
<path d="M524 672.5h1M524 673.5h1M523 674.5h1M525 674.5h1M523 675.5h1M525 675.5h1M523 676.5h1M525 676.5h1M522 677.5h1M526 677.5h1M522 678.5h1M526 678.5h1M522 679.5h1M526 679.5h1M522 680.5h1M526 680.5h1M521 681.5h1M527 681.5h1M521 682.5h1M527 682.5h1M521 683.5h1M527 683.5h1M520 684.5h1M528 684.5h1M520 685.5h9" stroke="#00ff00" stroke-width="1" fill="none"/>
<path d="M533 672.5h1M533 673.5h1M532 674.5h1M534 674.5h1M532 675.5h1M534 675.5h1M532 676.5h1M534 676.5h1M531 677.5h1M535 677.5h1M531 678.5h1M535 678.5h1M531 679.5h1M535 679.5h1M531 680.5h1M535 680.5h1M530 681.5h1M536 681.5h1M530 682.5h1M536 682.5h1M530 683.5h1M536 683.5h1M529 684.5h1M537 684.5h1M529 685.5h9" stroke="#00ff00" stroke-width="1" fill="none"/>
<path d="M560 672.5h1M560 673.5h1M559 674.5h1M561 674.5h1M559 675.5h1M561 675.5h1M559 676.5h1M561 676.5h1M558 677.5h1M562 677.5h1M558 678.5h1M562 678.5h1M558 679.5h1M562 679.5h1M558 680.5h1M562 680.5h1M557 681.5h1M563 681.5h1M557 682.5h1M563 682.5h1M557 683.5h1M563 683.5h1M556 684.5h1M564 684.5h1M556 685.5h9" stroke="#00ff00" stroke-width="1" fill="none"/>
<path d="M604 672.5h1M604 673.5h1M603 674.5h1M605 674.5h1M603 675.5h1M605 675.5h1M603 676.5h1M605 676.5h1M602 677.5h1M606 677.5h1M602 678.5h1M606 678.5h1M602 679.5h1M606 679.5h1M602 680.5h1M606 680.5h1M601 681.5h1M607 681.5h1M601 682.5h1M607 682.5h1M601 683.5h1M607 683.5h1M600 684.5h1M608 684.5h1M600 685.5h9" stroke="#00ff00" stroke-width="1" fill="none"/>
<path d="M692 672.5h1M692 673.5h1M691 674.5h1M693 674.5h1M691 675.5h1M693 675.5h1M691 676.5h1M693 676.5h1M690 677.5h1M694 677.5h1M690 678.5h1M694 678.5h1M690 679.5h1M694 679.5h1M690 680.5h1M694 680.5h1M689 681.5h1M695 681.5h1M689 682.5h1M695 682.5h1M689 683.5h1M695 683.5h1M688 684.5h1M696 684.5h1M688 685.5h9" stroke="#00ff00" stroke-width="1" fill="none"/>
<path d="M869 672.5h1M869 673.5h1M868 674.5h1M870 674.5h1M868 675.5h1M870 675.5h1M868 676.5h1M870 676.5h1M867 677.5h1M871 677.5h1M867 678.5h1M871 678.5h1M867 679.5h1M871 679.5h1M867 680.5h1M871 680.5h1M866 681.5h1M872 681.5h1M866 682.5h1M872 682.5h1M866 683.5h1M872 683.5h1M865 684.5h1M873 684.5h1M865 685.5h9" stroke="#00ff00" stroke-width="1" fill="none"/>
<path d="M558 660.5h9M558 661.5h1M566 661.5h1M559 662.5h1M565 662.5h1M559 663.5h1M565 663.5h1M559 664.5h1M565 664.5h1M560 665.5h1M564 665.5h1M560 666.5h1M564 666.5h1M560 667.5h1M564 667.5h1M561 668.5h1M563 668.5h1M561 669.5h1M563 669.5h1M561 670.5h1M563 670.5h1M562 671.5h1M562 672.5h1" stroke="#00ff00" stroke-width="1" fill="none"/>
</g></g>
<text y="658" fill="#00ff00" ><tspan x="559">8</tspan></text>
<g class="cr">
<path d="M517 673.5h1M516 674.5h1M518 674.5h1M515 675.5h1M519 675.5h1M514 676.5h1M520 676.5h1M513 677.5h1M521 677.5h1M512 678.5h1M522 678.5h1M511 679.5h1M523 679.5h1M510 680.5h15" stroke="#00ff00" stroke-width="1" fill="none"/>
<path d="M524 673.5h1M523 674.5h1M525 674.5h1M522 675.5h1M526 675.5h1M521 676.5h1M527 676.5h1M520 677.5h1M528 677.5h1M519 678.5h1M529 678.5h1M518 679.5h1M530 679.5h1M517 680.5h15" stroke="#00ff00" stroke-width="1" fill="none"/>
<path d="M533 673.5h1M532 674.5h1M534 674.5h1M531 675.5h1M535 675.5h1M530 676.5h1M536 676.5h1M529 677.5h1M537 677.5h1M528 678.5h1M538 678.5h1M527 679.5h1M539 679.5h1M526 680.5h15" stroke="#00ff00" stroke-width="1" fill="none"/>
<path d="M560 673.5h1M559 674.5h1M561 674.5h1M558 675.5h1M562 675.5h1M557 676.5h1M563 676.5h1M556 677.5h1M564 677.5h1M555 678.5h1M565 678.5h1M554 679.5h1M566 679.5h1M553 680.5h15" stroke="#00ff00" stroke-width="1" fill="none"/>
<path d="M604 673.5h1M603 674.5h1M605 674.5h1M602 675.5h1M606 675.5h1M601 676.5h1M607 676.5h1M600 677.5h1M608 677.5h1M599 678.5h1M609 678.5h1M598 679.5h1M610 679.5h1M597 680.5h15" stroke="#00ff00" stroke-width="1" fill="none"/>
<path d="M692 673.5h1M691 674.5h1M693 674.5h1M690 675.5h1M694 675.5h1M689 676.5h1M695 676.5h1M688 677.5h1M696 677.5h1M687 678.5h1M697 678.5h1M686 679.5h1M698 679.5h1M685 680.5h15" stroke="#00ff00" stroke-width="1" fill="none"/>
<path d="M869 673.5h1M868 674.5h1M870 674.5h1M867 675.5h1M871 675.5h1M866 676.5h1M872 676.5h1M865 677.5h1M873 677.5h1M864 678.5h1M874 678.5h1M863 679.5h1M875 679.5h1M862 680.5h15" stroke="#00ff00" stroke-width="1" fill="none"/>
<path d="M562.5 673.5 L555.5 680.5 L569.5 680.5 Z" fill="#00ff00" stroke="#00ff00" stroke-width="1" stroke-linejoin="bevel"/>
</g>
<g class="cr">
<path d="M509 665.5h1M509 666.5h2M509 667.5h3M509 668.5h4M509 669.5h5M509 670.5h6M509 671.5h7M509 672.5h8M509 673.5h7M509 674.5h6M509 675.5h5M509 676.5h4M509 677.5h3M509 678.5h2M509 679.5h1" stroke="#00ff00" stroke-width="1" fill="none"/>
</g>
<g class="cr">
<path d="M877 665.5h1M876 666.5h2M875 667.5h3M874 668.5h4M873 669.5h5M872 670.5h6M871 671.5h7M870 672.5h8M871 673.5h7M872 674.5h6M873 675.5h5M874 676.5h4M875 677.5h3M876 678.5h2M877 679.5h1" stroke="#00ff00" stroke-width="1" fill="none"/>
</g>
<text y="376" fill="#ff00ff" ><tspan x="15">Tr3 S33 Smith (R+jX) Scale 1.</tspan><tspan class="d" x="247.3 255.3 263.3">000</tspan><tspan x="271">U [F2]</tspan></text>
<g class="cr">
<circle cx="245.58" cy="531.0" r="117.92" fill="none" stroke="#3c3c3c" stroke-width="1"/>
<circle cx="269.17" cy="531.0" r="94.33" fill="none" stroke="#3c3c3c" stroke-width="1"/>
<circle cx="292.75" cy="531.0" r="70.75" fill="none" stroke="#3c3c3c" stroke-width="1"/>
<circle cx="316.33" cy="531.0" r="47.17" fill="none" stroke="#3c3c3c" stroke-width="1"/>
<circle cx="339.92" cy="531.0" r="23.58" fill="none" stroke="#3c3c3c" stroke-width="1"/>
<path d="M99 460.5h2M101 461.5h2M103 462.5h1M104 463.5h2M106 464.5h2M108 465.5h1M109 466.5h2M111 467.5h2M113 468.5h2M115 469.5h2M117 470.5h2M119 471.5h2M121 472.5h2M123 473.5h1M124 474.5h3M127 475.5h2M129 476.5h1M130 477.5h3M133 478.5h2M135 479.5h2M137 480.5h2M139 481.5h2M141 482.5h3M144 483.5h2M146 484.5h2M148 485.5h2M150 486.5h2M152 487.5h3M155 488.5h2M157 489.5h2M159 490.5h2M161 491.5h3M164 492.5h3M167 493.5h2M169 494.5h3M172 495.5h2M174 496.5h3M177 497.5h3M180 498.5h2M182 499.5h3M185 500.5h3M188 501.5h3M191 502.5h3M194 503.5h3M197 504.5h3M200 505.5h3M203 506.5h3M206 507.5h3M209 508.5h3M212 509.5h4M216 510.5h3M219 511.5h4M223 512.5h4M227 513.5h3M230 514.5h4M234 515.5h4M238 516.5h5M243 517.5h4M247 518.5h4M251 519.5h5M256 520.5h5M261 521.5h5M266 522.5h6M272 523.5h5M277 524.5h7M284 525.5h7M291 526.5h8M299 527.5h8M307 528.5h11M318 529.5h13M331 530.5h33" stroke="#3c3c3c" stroke-width="1" fill="none"/>
<path d="M331 531.5h33M318 532.5h13M307 533.5h11M299 534.5h8M291 535.5h8M284 536.5h7M277 537.5h7M272 538.5h5M266 539.5h6M261 540.5h5M256 541.5h5M251 542.5h5M247 543.5h4M243 544.5h4M238 545.5h5M234 546.5h4M230 547.5h4M227 548.5h3M223 549.5h4M219 550.5h4M216 551.5h3M212 552.5h4M209 553.5h3M206 554.5h3M203 555.5h3M200 556.5h3M197 557.5h3M194 558.5h3M191 559.5h3M188 560.5h3M185 561.5h3M182 562.5h3M180 563.5h2M177 564.5h3M174 565.5h3M172 566.5h2M169 567.5h3M167 568.5h2M164 569.5h3M161 570.5h3M159 571.5h2M157 572.5h2M155 573.5h2M152 574.5h3M150 575.5h2M148 576.5h2M146 577.5h2M144 578.5h2M141 579.5h3M139 580.5h2M137 581.5h2M135 582.5h2M133 583.5h2M130 584.5h3M129 585.5h1M127 586.5h2M124 587.5h3M123 588.5h1M121 589.5h2M119 590.5h2M117 591.5h2M115 592.5h2M113 593.5h2M111 594.5h2M109 595.5h2M108 596.5h1M106 597.5h2M104 598.5h2M103 599.5h1M101 600.5h2M99 601.5h2" stroke="#3c3c3c" stroke-width="1" fill="none"/>
<path d="M151 408.5h1M152 409.5h1M152 410.5h1M153 411.5h1M153 412.5h1M154 413.5h1M154 414.5h1M155 415.5h1M156 416.5h1M156 417.5h1M157 418.5h1M158 419.5h1M158 420.5h1M159 421.5h1M159 422.5h1M160 423.5h1M161 424.5h1M162 425.5h1M162 426.5h1M163 427.5h1M164 428.5h1M164 429.5h1M165 430.5h1M166 431.5h1M167 432.5h1M167 433.5h1M168 434.5h1M169 435.5h1M170 436.5h1M171 437.5h1M171 438.5h1M172 439.5h1M173 440.5h1M174 441.5h1M175 442.5h1M175 443.5h1M176 444.5h1M177 445.5h1M178 446.5h1M179 447.5h1M180 448.5h1M181 449.5h1M181 450.5h1M182 451.5h1M183 452.5h1M184 453.5h1M185 454.5h1M186 455.5h1M187 456.5h1M188 457.5h1M189 458.5h1M190 459.5h1M191 460.5h1M192 461.5h1M193 462.5h1M194 463.5h1M195 464.5h1M196 465.5h1M197 466.5h1M198 467.5h1M199 468.5h1M200 469.5h1M201 470.5h2M203 471.5h1M204 472.5h1M205 473.5h1M206 474.5h1M207 475.5h2M209 476.5h1M210 477.5h1M211 478.5h1M212 479.5h2M214 480.5h1M215 481.5h1M216 482.5h2M218 483.5h1M219 484.5h1M220 485.5h2M222 486.5h1M223 487.5h2M225 488.5h1M226 489.5h2M228 490.5h1M229 491.5h2M231 492.5h1M232 493.5h2M234 494.5h1M235 495.5h2M237 496.5h2M239 497.5h1M240 498.5h2M242 499.5h2M244 500.5h2M246 501.5h2M248 502.5h2M250 503.5h2M252 504.5h1M253 505.5h2M255 506.5h2M257 507.5h2M259 508.5h3M262 509.5h2M264 510.5h2M266 511.5h3M269 512.5h2M271 513.5h3M274 514.5h2M276 515.5h3M279 516.5h3M282 517.5h3M285 518.5h2M287 519.5h3M290 520.5h4M294 521.5h4M298 522.5h3M301 523.5h4M305 524.5h5M310 525.5h4M314 526.5h6M320 527.5h5M325 528.5h7M332 529.5h9M341 530.5h23" stroke="#3c3c3c" stroke-width="1" fill="none"/>
<path d="M341 531.5h23M332 532.5h9M325 533.5h7M320 534.5h5M314 535.5h6M310 536.5h4M305 537.5h5M301 538.5h4M298 539.5h3M294 540.5h4M290 541.5h4M287 542.5h3M285 543.5h2M282 544.5h3M279 545.5h3M276 546.5h3M274 547.5h2M271 548.5h3M269 549.5h2M266 550.5h3M264 551.5h2M262 552.5h2M259 553.5h3M257 554.5h2M255 555.5h2M253 556.5h2M252 557.5h1M250 558.5h2M248 559.5h2M246 560.5h2M244 561.5h2M242 562.5h2M240 563.5h2M239 564.5h1M237 565.5h2M235 566.5h2M234 567.5h1M232 568.5h2M231 569.5h1M229 570.5h2M228 571.5h1M226 572.5h2M225 573.5h1M223 574.5h2M222 575.5h1M220 576.5h2M219 577.5h1M218 578.5h1M216 579.5h2M215 580.5h1M214 581.5h1M212 582.5h2M211 583.5h1M210 584.5h1M209 585.5h1M207 586.5h2M206 587.5h1M205 588.5h1M204 589.5h1M203 590.5h1M201 591.5h2M200 592.5h1M199 593.5h1M198 594.5h1M197 595.5h1M196 596.5h1M195 597.5h1M194 598.5h1M193 599.5h1M192 600.5h1M191 601.5h1M190 602.5h1M189 603.5h1M188 604.5h1M187 605.5h1M186 606.5h1M185 607.5h1M184 608.5h1M183 609.5h1M182 610.5h1M181 611.5h1M181 612.5h1M180 613.5h1M179 614.5h1M178 615.5h1M177 616.5h1M176 617.5h1M175 618.5h1M175 619.5h1M174 620.5h1M173 621.5h1M172 622.5h1M171 623.5h1M171 624.5h1M170 625.5h1M169 626.5h1M168 627.5h1M167 628.5h1M167 629.5h1M166 630.5h1M165 631.5h1M164 632.5h1M164 633.5h1M163 634.5h1M162 635.5h1M162 636.5h1M161 637.5h1M160 638.5h1M159 639.5h1M159 640.5h1M158 641.5h1M158 642.5h1M157 643.5h1M156 644.5h1M156 645.5h1M155 646.5h1M154 647.5h1M154 648.5h1M153 649.5h1M153 650.5h1M152 651.5h1M152 652.5h1M151 653.5h1" stroke="#3c3c3c" stroke-width="1" fill="none"/>
<path d="M221 389.5h1M222 390.5h1M222 391.5h1M222 392.5h1M222 393.5h1M222 394.5h1M222 395.5h1M222 396.5h1M222 397.5h1M222 398.5h1M222 399.5h1M222 400.5h1M222 401.5h1M222 402.5h1M222 403.5h1M222 404.5h1M222 405.5h1M223 406.5h1M223 407.5h1M223 408.5h1M223 409.5h1M223 410.5h1M223 411.5h1M223 412.5h1M224 413.5h1M224 414.5h1M224 415.5h1M224 416.5h1M224 417.5h1M225 418.5h1M225 419.5h1M225 420.5h1M225 421.5h1M225 422.5h1M226 423.5h1M226 424.5h1M226 425.5h1M227 426.5h1M227 427.5h1M227 428.5h1M227 429.5h1M228 430.5h1M228 431.5h1M228 432.5h1M229 433.5h1M229 434.5h1M229 435.5h1M230 436.5h1M230 437.5h1M230 438.5h1M231 439.5h1M231 440.5h1M232 441.5h1M232 442.5h1M232 443.5h1M233 444.5h1M233 445.5h1M234 446.5h1M234 447.5h1M235 448.5h1M235 449.5h1M236 450.5h1M236 451.5h1M236 452.5h1M237 453.5h1M237 454.5h1M238 455.5h1M239 456.5h1M239 457.5h1M240 458.5h1M240 459.5h1M241 460.5h1M241 461.5h1M242 462.5h1M243 463.5h1M243 464.5h1M244 465.5h1M245 466.5h1M245 467.5h1M246 468.5h1M246 469.5h1M247 470.5h1M248 471.5h1M249 472.5h1M249 473.5h1M250 474.5h1M251 475.5h1M252 476.5h1M253 477.5h1M253 478.5h1M254 479.5h1M255 480.5h1M256 481.5h1M257 482.5h1M258 483.5h1M259 484.5h1M260 485.5h1M260 486.5h1M261 487.5h1M262 488.5h1M263 489.5h1M264 490.5h1M265 491.5h1M266 492.5h1M267 493.5h1M268 494.5h1M269 495.5h1M270 496.5h1M271 497.5h1M272 498.5h1M273 499.5h2M275 500.5h1M276 501.5h1M277 502.5h2M279 503.5h1M280 504.5h1M281 505.5h2M283 506.5h1M284 507.5h2M286 508.5h2M288 509.5h1M289 510.5h2M291 511.5h1M292 512.5h2M294 513.5h2M296 514.5h2M298 515.5h2M300 516.5h2M302 517.5h2M304 518.5h2M306 519.5h3M309 520.5h2M311 521.5h3M314 522.5h3M317 523.5h3M320 524.5h3M323 525.5h3M326 526.5h4M330 527.5h4M334 528.5h6M340 529.5h6M346 530.5h18" stroke="#3c3c3c" stroke-width="1" fill="none"/>
<path d="M346 531.5h18M340 532.5h6M334 533.5h6M330 534.5h4M326 535.5h4M323 536.5h3M320 537.5h3M317 538.5h3M314 539.5h3M311 540.5h3M309 541.5h2M306 542.5h3M304 543.5h2M302 544.5h2M300 545.5h2M298 546.5h2M296 547.5h2M294 548.5h2M292 549.5h2M291 550.5h1M289 551.5h2M288 552.5h1M286 553.5h2M284 554.5h2M283 555.5h1M281 556.5h2M280 557.5h1M279 558.5h1M277 559.5h2M276 560.5h1M275 561.5h1M273 562.5h2M272 563.5h1M271 564.5h1M270 565.5h1M269 566.5h1M268 567.5h1M267 568.5h1M266 569.5h1M265 570.5h1M264 571.5h1M263 572.5h1M262 573.5h1M261 574.5h1M260 575.5h1M260 576.5h1M259 577.5h1M258 578.5h1M257 579.5h1M256 580.5h1M255 581.5h1M254 582.5h1M253 583.5h1M253 584.5h1M252 585.5h1M251 586.5h1M250 587.5h1M249 588.5h1M249 589.5h1M248 590.5h1M247 591.5h1M246 592.5h1M246 593.5h1M245 594.5h1M245 595.5h1M244 596.5h1M243 597.5h1M243 598.5h1M242 599.5h1M241 600.5h1M241 601.5h1M240 602.5h1M240 603.5h1M239 604.5h1M239 605.5h1M238 606.5h1M237 607.5h1M237 608.5h1M236 609.5h1M236 610.5h1M236 611.5h1M235 612.5h1M235 613.5h1M234 614.5h1M234 615.5h1M233 616.5h1M233 617.5h1M232 618.5h1M232 619.5h1M232 620.5h1M231 621.5h1M231 622.5h1M230 623.5h1M230 624.5h1M230 625.5h1M229 626.5h1M229 627.5h1M229 628.5h1M228 629.5h1M228 630.5h1M228 631.5h1M227 632.5h1M227 633.5h1M227 634.5h1M227 635.5h1M226 636.5h1M226 637.5h1M226 638.5h1M225 639.5h1M225 640.5h1M225 641.5h1M225 642.5h1M225 643.5h1M224 644.5h1M224 645.5h1M224 646.5h1M224 647.5h1M224 648.5h1M223 649.5h1M223 650.5h1M223 651.5h1M223 652.5h1M223 653.5h1M223 654.5h1M223 655.5h1M222 656.5h1M222 657.5h1M222 658.5h1M222 659.5h1M222 660.5h1M222 661.5h1M222 662.5h1M222 663.5h1M222 664.5h1M222 665.5h1M222 666.5h1M222 667.5h1M222 668.5h1M222 669.5h1M222 670.5h1M222 671.5h1M221 672.5h1" stroke="#3c3c3c" stroke-width="1" fill="none"/>
<path d="M292 408.5h1M291 409.5h1M291 410.5h1M290 411.5h1M290 412.5h1M289 413.5h1M289 414.5h1M288 415.5h1M288 416.5h1M288 417.5h1M287 418.5h1M287 419.5h1M286 420.5h1M286 421.5h1M286 422.5h1M285 423.5h1M285 424.5h1M285 425.5h1M284 426.5h1M284 427.5h1M284 428.5h1M284 429.5h1M283 430.5h1M283 431.5h1M283 432.5h1M283 433.5h1M283 434.5h1M282 435.5h1M282 436.5h1M282 437.5h1M282 438.5h1M282 439.5h1M282 440.5h1M282 441.5h1M282 442.5h1M281 443.5h1M281 444.5h1M281 445.5h1M281 446.5h1M281 447.5h1M281 448.5h1M281 449.5h1M281 450.5h1M281 451.5h1M281 452.5h1M281 453.5h1M281 454.5h1M282 455.5h1M282 456.5h1M282 457.5h1M282 458.5h1M282 459.5h1M282 460.5h1M282 461.5h1M282 462.5h1M283 463.5h1M283 464.5h1M283 465.5h1M283 466.5h1M283 467.5h1M284 468.5h1M284 469.5h1M284 470.5h1M284 471.5h1M285 472.5h1M285 473.5h1M285 474.5h1M286 475.5h1M286 476.5h1M286 477.5h1M287 478.5h1M287 479.5h1M288 480.5h1M288 481.5h1M288 482.5h1M289 483.5h1M289 484.5h1M290 485.5h1M291 486.5h1M291 487.5h1M292 488.5h1M292 489.5h1M293 490.5h1M293 491.5h1M294 492.5h1M294 493.5h1M295 494.5h1M296 495.5h1M296 496.5h1M297 497.5h1M298 498.5h1M299 499.5h1M300 500.5h1M300 501.5h1M301 502.5h1M302 503.5h1M303 504.5h1M304 505.5h1M305 506.5h1M306 507.5h1M307 508.5h1M308 509.5h1M309 510.5h1M310 511.5h1M311 512.5h1M312 513.5h1M313 514.5h2M315 515.5h1M316 516.5h2M318 517.5h1M319 518.5h2M321 519.5h1M322 520.5h2M324 521.5h2M326 522.5h2M328 523.5h2M330 524.5h2M332 525.5h4M336 526.5h2M338 527.5h4M342 528.5h3M345 529.5h5M350 530.5h14" stroke="#3c3c3c" stroke-width="1" fill="none"/>
<path d="M350 531.5h14M345 532.5h5M342 533.5h3M338 534.5h4M336 535.5h2M332 536.5h4M330 537.5h2M328 538.5h2M326 539.5h2M324 540.5h2M322 541.5h2M321 542.5h1M319 543.5h2M318 544.5h1M316 545.5h2M315 546.5h1M313 547.5h2M312 548.5h1M311 549.5h1M310 550.5h1M309 551.5h1M308 552.5h1M307 553.5h1M306 554.5h1M305 555.5h1M304 556.5h1M303 557.5h1M302 558.5h1M301 559.5h1M300 560.5h1M300 561.5h1M299 562.5h1M298 563.5h1M297 564.5h1M296 565.5h1M296 566.5h1M295 567.5h1M294 568.5h1M294 569.5h1M293 570.5h1M293 571.5h1M292 572.5h1M292 573.5h1M291 574.5h1M291 575.5h1M290 576.5h1M289 577.5h1M289 578.5h1M288 579.5h1M288 580.5h1M288 581.5h1M287 582.5h1M287 583.5h1M286 584.5h1M286 585.5h1M286 586.5h1M285 587.5h1M285 588.5h1M285 589.5h1M284 590.5h1M284 591.5h1M284 592.5h1M284 593.5h1M283 594.5h1M283 595.5h1M283 596.5h1M283 597.5h1M283 598.5h1M282 599.5h1M282 600.5h1M282 601.5h1M282 602.5h1M282 603.5h1M282 604.5h1M282 605.5h1M282 606.5h1M281 607.5h1M281 608.5h1M281 609.5h1M281 610.5h1M281 611.5h1M281 612.5h1M281 613.5h1M281 614.5h1M281 615.5h1M281 616.5h1M281 617.5h1M281 618.5h1M282 619.5h1M282 620.5h1M282 621.5h1M282 622.5h1M282 623.5h1M282 624.5h1M282 625.5h1M282 626.5h1M283 627.5h1M283 628.5h1M283 629.5h1M283 630.5h1M283 631.5h1M284 632.5h1M284 633.5h1M284 634.5h1M284 635.5h1M285 636.5h1M285 637.5h1M285 638.5h1M286 639.5h1M286 640.5h1M286 641.5h1M287 642.5h1M287 643.5h1M288 644.5h1M288 645.5h1M288 646.5h1M289 647.5h1M289 648.5h1M290 649.5h1M290 650.5h1M291 651.5h1M291 652.5h1M292 653.5h1" stroke="#3c3c3c" stroke-width="1" fill="none"/>
<path d="M344 460.5h1M342 461.5h2M341 462.5h1M340 463.5h1M339 464.5h1M337 465.5h2M336 466.5h1M335 467.5h1M334 468.5h1M333 469.5h1M332 470.5h1M331 471.5h1M331 472.5h1M330 473.5h1M330 474.5h1M329 475.5h1M329 476.5h1M328 477.5h1M328 478.5h1M327 479.5h1M327 480.5h1M327 481.5h1M326 482.5h1M326 483.5h1M326 484.5h1M326 485.5h1M326 486.5h1M325 487.5h1M325 488.5h1M325 489.5h1M325 490.5h1M325 491.5h1M325 492.5h1M325 493.5h1M325 494.5h1M325 495.5h1M325 496.5h1M325 497.5h1M326 498.5h1M326 499.5h1M326 500.5h1M326 501.5h1M326 502.5h1M327 503.5h1M327 504.5h1M327 505.5h1M328 506.5h1M328 507.5h1M329 508.5h1M329 509.5h1M329 510.5h1M330 511.5h1M331 512.5h1M331 513.5h1M332 514.5h1M333 515.5h1M334 516.5h1M334 517.5h1M335 518.5h1M336 519.5h1M337 520.5h1M338 521.5h1M339 522.5h1M340 523.5h2M342 524.5h1M343 525.5h2M345 526.5h1M346 527.5h3M349 528.5h3M352 529.5h2M354 530.5h10" stroke="#3c3c3c" stroke-width="1" fill="none"/>
<path d="M354 531.5h10M352 532.5h2M349 533.5h3M346 534.5h3M345 535.5h1M343 536.5h2M342 537.5h1M340 538.5h2M339 539.5h1M338 540.5h1M337 541.5h1M336 542.5h1M335 543.5h1M334 544.5h1M334 545.5h1M333 546.5h1M332 547.5h1M331 548.5h1M331 549.5h1M330 550.5h1M329 551.5h1M329 552.5h1M329 553.5h1M328 554.5h1M328 555.5h1M327 556.5h1M327 557.5h1M327 558.5h1M326 559.5h1M326 560.5h1M326 561.5h1M326 562.5h1M326 563.5h1M325 564.5h1M325 565.5h1M325 566.5h1M325 567.5h1M325 568.5h1M325 569.5h1M325 570.5h1M325 571.5h1M325 572.5h1M325 573.5h1M325 574.5h1M326 575.5h1M326 576.5h1M326 577.5h1M326 578.5h1M326 579.5h1M327 580.5h1M327 581.5h1M327 582.5h1M328 583.5h1M328 584.5h1M329 585.5h1M329 586.5h1M330 587.5h1M330 588.5h1M331 589.5h1M331 590.5h1M332 591.5h1M333 592.5h1M334 593.5h1M335 594.5h1M336 595.5h1M337 596.5h2M339 597.5h1M340 598.5h1M341 599.5h1M342 600.5h2M344 601.5h1" stroke="#3c3c3c" stroke-width="1" fill="none"/>
<circle cx="222.0" cy="531.0" r="141.5" fill="none" stroke="#a0a0a0" stroke-width="1"/>
<rect x="80" y="531" width="284" height="1" fill="#a0a0a0"/>
</g>
<text y="402" fill="#ff00ff" ><tspan x="19"> 1  1</tspan><tspan class="d" x="59.3 67.3">00</tspan><tspan x="75">.</tspan><tspan class="d" x="83.3 91.3 99.3 107.3 115.3">00000</tspan><tspan x="123"> MHz  5</tspan><tspan class="d" x="179.3">0</tspan><tspan x="187">.768 Ω  14.239 Ω   22.663 nH</tspan></text>
<text y="415" fill="#ff00ff" ><tspan x="19"> 2  5</tspan><tspan class="d" x="59.3 67.3">00</tspan><tspan x="75">.</tspan><tspan class="d" x="83.3 91.3 99.3 107.3 115.3">00000</tspan><tspan x="123"> MHz  52.627 Ω  72.839 Ω   23.185 nH</tspan></text>
<text y="428" fill="#ff00ff" ><tspan x="19"> 3  1.</tspan><tspan class="d" x="67.3 75.3 83.3 91.3 99.3 107.3 115.3">0000000</tspan><tspan x="123"> GHz  57.8</tspan><tspan class="d" x="203.3">0</tspan><tspan x="211">5 Ω  17</tspan><tspan class="d" x="267.3">0</tspan><tspan x="275">.87 Ω   27.194 nH</tspan></text>
<text y="441" fill="#ff00ff" ><tspan x="19"> 4  2.5</tspan><tspan class="d" x="75.3 83.3 91.3 99.3 107.3 115.3">000000</tspan><tspan x="123"> GHz  43</tspan><tspan class="d" x="187.3">0</tspan><tspan x="195">.67 Ω −3.5</tspan><tspan class="d" x="275.3">0</tspan><tspan x="283">44 kΩ  18.166 fF</tspan></text>
<text y="454" fill="#ff00ff" ><tspan x="19"> 5  5.</tspan><tspan class="d" x="67.3 75.3 83.3 91.3 99.3 107.3 115.3">0000000</tspan><tspan x="123"> GHz  31.522 Ω −188.67 Ω   168.71 fF</tspan></text>
<text y="467" fill="#ff00ff" ><tspan x="19"> 6  1</tspan><tspan class="d" x="59.3">0</tspan><tspan x="67">.</tspan><tspan class="d" x="75.3 83.3 91.3 99.3 107.3 115.3">000000</tspan><tspan x="123"> GHz  42.119 Ω −4</tspan><tspan class="d" x="259.3">0</tspan><tspan x="267">.318 Ω   394.75 fF</tspan></text>
<text y="480" fill="#ff00ff" ><tspan x="19"> 7  2</tspan><tspan class="d" x="59.3">0</tspan><tspan x="67">.</tspan><tspan class="d" x="75.3 83.3 91.3 99.3 107.3 115.3">000000</tspan><tspan x="123"> GHz  182.2</tspan><tspan class="d" x="211.3">0</tspan><tspan x="219"> Ω −1</tspan><tspan class="d" x="259.3">0</tspan><tspan x="267">2.85 Ω   73.786 fF</tspan></text>
<text y="493" fill="#ff00ff" ><tspan x="19">&gt;8  2.6145242 GHz  97.176 Ω −1.8</tspan><tspan class="d" x="275.3 283.3">00</tspan><tspan x="291">6 kΩ  33.8</tspan><tspan class="d" x="371.3">0</tspan><tspan x="379">7 fF</tspan></text>
<g class="cr">
<path d="M283 463.5h17M277 464.5h6M300 464.5h6M272 465.5h5M306 465.5h4M268 466.5h4M310 466.5h3M265 467.5h3M313 467.5h3M262 468.5h3M316 468.5h3M260 469.5h2M319 469.5h2M257 470.5h3M321 470.5h3M256 471.5h1M324 471.5h1M254 472.5h2M325 472.5h2M252 473.5h2M327 473.5h2M251 474.5h1M329 474.5h1M250 475.5h1M330 475.5h2M249 476.5h1M332 476.5h1M247 477.5h2M333 477.5h1M246 478.5h1M334 478.5h2M245 479.5h1M336 479.5h1M244 480.5h1M337 480.5h1M243 481.5h1M338 481.5h1M242 482.5h1M339 482.5h1M241 483.5h1M340 483.5h1M240 484.5h1M341 484.5h1M239 485.5h1M342 485.5h1M238 486.5h1M343 486.5h1M238 487.5h1M344 487.5h1M237 488.5h1M345 488.5h1M236 489.5h1M346 489.5h1M236 490.5h1M346 490.5h1M235 491.5h1M347 491.5h1M234 492.5h1M348 492.5h1M233 493.5h1M349 493.5h1M233 494.5h1M349 494.5h1M232 495.5h1M350 495.5h1M231 496.5h1M351 496.5h1M231 497.5h1M351 497.5h1M230 498.5h1M352 498.5h1M230 499.5h1M352 499.5h1M229 500.5h1M353 500.5h1M229 501.5h1M353 501.5h1M229 502.5h1M354 502.5h1M228 503.5h1M354 503.5h1M228 504.5h1M354 504.5h1M227 505.5h1M355 505.5h1M227 506.5h1M283 506.5h2M355 506.5h1M227 507.5h1M275 507.5h8M285 507.5h7M356 507.5h1M226 508.5h1M269 508.5h6M292 508.5h3M356 508.5h1M226 509.5h1M266 509.5h3M295 509.5h3M356 509.5h1M225 510.5h1M263 510.5h3M298 510.5h3M357 510.5h1M225 511.5h1M261 511.5h2M301 511.5h2M358 511.5h1M224 512.5h1M259 512.5h2M303 512.5h2M358 512.5h1M224 513.5h1M258 513.5h1M305 513.5h2M358 513.5h1M224 514.5h1M256 514.5h2M307 514.5h2M358 514.5h1M224 515.5h1M254 515.5h2M262 515.5h14M309 515.5h1M359 515.5h1M224 516.5h1M252 516.5h2M257 516.5h5M276 516.5h5M310 516.5h2M359 516.5h1M223 517.5h1M251 517.5h6M281 517.5h4M312 517.5h1M360 517.5h1M223 518.5h1M250 518.5h2M285 518.5h2M313 518.5h1M360 518.5h1M223 519.5h1M248 519.5h2M287 519.5h2M314 519.5h2M360 519.5h1M222 520.5h1M246 520.5h2M289 520.5h2M316 520.5h1M361 520.5h1M222 521.5h1M245 521.5h1M291 521.5h2M317 521.5h1M361 521.5h1M244 522.5h1M293 522.5h1M318 522.5h1M361 522.5h1M243 523.5h1M294 523.5h2M319 523.5h1M361 523.5h1M240 524.5h3M296 524.5h2M320 524.5h1M362 524.5h1M239 525.5h1M241 525.5h1M298 525.5h1M320 525.5h1M362 525.5h1M238 526.5h1M240 526.5h1M299 526.5h1M321 526.5h1M362 526.5h1M236 527.5h2M239 527.5h1M300 527.5h1M322 527.5h1M362 527.5h1M234 528.5h2M238 528.5h1M301 528.5h1M323 528.5h1M362 528.5h1M233 529.5h1M237 529.5h1M302 529.5h1M324 529.5h1M362 529.5h1M232 530.5h1M237 530.5h1M303 530.5h1M324 530.5h1M362 530.5h1M231 531.5h1M236 531.5h1M303 531.5h1M325 531.5h1M362 531.5h1M230 532.5h1M236 532.5h1M304 532.5h1M325 532.5h1M362 532.5h1M229 533.5h1M235 533.5h1M305 533.5h1M326 533.5h1M362 533.5h1M227 534.5h2M235 534.5h1M305 534.5h1M327 534.5h1M362 534.5h1M226 535.5h1M234 535.5h1M306 535.5h1M327 535.5h1M362 535.5h1M225 536.5h1M234 536.5h1M306 536.5h1M328 536.5h1M362 536.5h1M224 537.5h1M233 537.5h1M307 537.5h1M328 537.5h1M362 537.5h1M224 538.5h1M233 538.5h1M307 538.5h1M329 538.5h1M362 538.5h1M223 539.5h1M233 539.5h1M307 539.5h1M329 539.5h1M362 539.5h1M222 540.5h1M232 540.5h1M308 540.5h1M330 540.5h1M362 540.5h1M221 541.5h1M232 541.5h1M308 541.5h1M330 541.5h1M362 541.5h1M220 542.5h1M232 542.5h1M309 542.5h1M331 542.5h1M362 542.5h1M220 543.5h1M231 543.5h1M310 543.5h1M331 543.5h1M362 543.5h1M219 544.5h1M230 544.5h1M310 544.5h1M331 544.5h1M362 544.5h1M218 545.5h1M230 545.5h1M310 545.5h1M332 545.5h1M361 545.5h1M217 546.5h1M229 546.5h1M311 546.5h1M332 546.5h1M361 546.5h1M217 547.5h1M229 547.5h1M311 547.5h1M332 547.5h1M361 547.5h1M216 548.5h1M229 548.5h1M311 548.5h1M333 548.5h1M361 548.5h1M216 549.5h1M229 549.5h1M311 549.5h1M333 549.5h1M361 549.5h1M215 550.5h1M228 550.5h1M312 550.5h1M333 550.5h1M360 550.5h1M215 551.5h1M228 551.5h1M312 551.5h1M333 551.5h1M360 551.5h1M214 552.5h1M228 552.5h1M312 552.5h1M334 552.5h1M360 552.5h1M213 553.5h1M228 553.5h1M312 553.5h1M334 553.5h1M360 553.5h1M213 554.5h1M228 554.5h1M313 554.5h1M334 554.5h1M359 554.5h1M212 555.5h1M228 555.5h1M313 555.5h1M334 555.5h1M359 555.5h1M212 556.5h1M228 556.5h1M313 556.5h1M334 556.5h1M359 556.5h1M212 557.5h1M228 557.5h1M334 557.5h1M358 557.5h1M211 558.5h1M228 558.5h1M334 558.5h1M358 558.5h1M211 559.5h1M228 559.5h1M334 559.5h1M358 559.5h1M211 560.5h1M228 560.5h1M334 560.5h1M357 560.5h1M211 561.5h1M228 561.5h1M334 561.5h1M357 561.5h1M210 562.5h1M228 562.5h1M334 562.5h1M357 562.5h1M210 563.5h1M228 563.5h1M334 563.5h1M356 563.5h1M210 564.5h1M228 564.5h1M334 564.5h1M356 564.5h1M210 565.5h1M228 565.5h1M334 565.5h1M355 565.5h1M210 566.5h1M229 566.5h1M334 566.5h1M355 566.5h1M210 567.5h1M229 567.5h1M334 567.5h1M355 567.5h1M210 568.5h1M229 568.5h1M334 568.5h1M354 568.5h1M210 569.5h1M229 569.5h1M334 569.5h1M353 569.5h1M209 570.5h1M229 570.5h1M333 570.5h1M353 570.5h1M209 571.5h1M229 571.5h1M333 571.5h1M352 571.5h1M209 572.5h1M229 572.5h1M333 572.5h1M352 572.5h1M210 573.5h1M229 573.5h1M333 573.5h1M351 573.5h1M210 574.5h1M229 574.5h1M332 574.5h1M351 574.5h1M210 575.5h1M230 575.5h1M332 575.5h1M351 575.5h1M210 576.5h1M230 576.5h1M332 576.5h1M350 576.5h1M210 577.5h1M230 577.5h1M331 577.5h1M350 577.5h1M210 578.5h1M230 578.5h1M331 578.5h1M349 578.5h1M211 579.5h1M231 579.5h1M330 579.5h1M348 579.5h1M211 580.5h1M231 580.5h1M330 580.5h1M347 580.5h1M211 581.5h1M231 581.5h1M329 581.5h1M347 581.5h1M212 582.5h1M232 582.5h1M329 582.5h1M346 582.5h1M212 583.5h1M232 583.5h1M328 583.5h1M345 583.5h1M212 584.5h1M232 584.5h1M328 584.5h1M344 584.5h1M213 585.5h1M233 585.5h1M327 585.5h1M344 585.5h1M214 586.5h1M233 586.5h1M327 586.5h1M343 586.5h1M214 587.5h1M234 587.5h1M326 587.5h1M343 587.5h1M214 588.5h1M234 588.5h1M325 588.5h1M341 588.5h2M214 589.5h1M234 589.5h1M325 589.5h1M340 589.5h1M215 590.5h1M235 590.5h1M324 590.5h1M340 590.5h1M216 591.5h1M236 591.5h1M324 591.5h1M339 591.5h1M217 592.5h1M236 592.5h1M323 592.5h1M338 592.5h1M217 593.5h1M237 593.5h1M323 593.5h1M337 593.5h1M218 594.5h1M237 594.5h1M323 594.5h1M336 594.5h1M218 595.5h1M238 595.5h1M322 595.5h1M335 595.5h1M219 596.5h1M239 596.5h1M322 596.5h1M334 596.5h1M220 597.5h1M240 597.5h1M321 597.5h1M333 597.5h1M221 598.5h2M241 598.5h1M320 598.5h1M331 598.5h2M223 599.5h6M242 599.5h1M319 599.5h1M329 599.5h2M229 600.5h10M243 600.5h1M317 600.5h2M328 600.5h1M239 601.5h1M244 601.5h1M316 601.5h1M326 601.5h2M239 602.5h1M245 602.5h1M315 602.5h1M325 602.5h1M239 603.5h1M246 603.5h1M314 603.5h1M323 603.5h2M240 604.5h2M247 604.5h1M312 604.5h2M322 604.5h1M242 605.5h2M248 605.5h2M310 605.5h2M320 605.5h2M244 606.5h3M250 606.5h2M308 606.5h2M318 606.5h2M247 607.5h6M301 607.5h3M305 607.5h3M317 607.5h1M253 608.5h2M300 608.5h1M304 608.5h1M315 608.5h2M255 609.5h1M301 609.5h1M303 609.5h2M312 609.5h3M256 610.5h2M301 610.5h3M310 610.5h2M258 611.5h3M297 611.5h4M308 611.5h2M261 612.5h3M293 612.5h4M303 612.5h5M264 613.5h4M287 613.5h6M296 613.5h7M266 614.5h21M293 614.5h3M268 615.5h4M287 615.5h6M272 616.5h15" stroke="#ff00ff" stroke-width="1" fill="none"/>
</g>
<g class="cr">
<path d="M225 511.5h1M225 512.5h1M224 513.5h1M226 513.5h1M224 514.5h1M226 514.5h1M224 515.5h1M226 515.5h1M223 516.5h1M227 516.5h1M223 517.5h1M227 517.5h1M223 518.5h1M227 518.5h1M223 519.5h1M227 519.5h1M222 520.5h1M228 520.5h1M222 521.5h1M228 521.5h1M222 522.5h1M228 522.5h1M221 523.5h1M229 523.5h1M221 524.5h9" stroke="#ff00ff" stroke-width="1" fill="none"/>
<path d="M271 466.5h1M271 467.5h1M270 468.5h1M272 468.5h1M270 469.5h1M272 469.5h1M270 470.5h1M272 470.5h1M269 471.5h1M273 471.5h1M269 472.5h1M273 472.5h1M269 473.5h1M273 473.5h1M269 474.5h1M273 474.5h1M268 475.5h1M274 475.5h1M268 476.5h1M274 476.5h1M268 477.5h1M274 477.5h1M267 478.5h1M275 478.5h1M267 479.5h9" stroke="#ff00ff" stroke-width="1" fill="none"/>
<path d="M325 471.5h1M325 472.5h1M324 473.5h1M326 473.5h1M324 474.5h1M326 474.5h1M324 475.5h1M326 475.5h1M323 476.5h1M327 476.5h1M323 477.5h1M327 477.5h1M323 478.5h1M327 478.5h1M323 479.5h1M327 479.5h1M322 480.5h1M328 480.5h1M322 481.5h1M328 481.5h1M322 482.5h1M328 482.5h1M321 483.5h1M329 483.5h1M321 484.5h9" stroke="#ff00ff" stroke-width="1" fill="none"/>
<path d="M362 535.5h1M362 536.5h1M361 537.5h1M363 537.5h1M361 538.5h1M363 538.5h1M361 539.5h1M363 539.5h1M360 540.5h1M364 540.5h1M360 541.5h1M364 541.5h1M360 542.5h1M364 542.5h1M360 543.5h1M364 543.5h1M359 544.5h1M365 544.5h1M359 545.5h1M365 545.5h1M359 546.5h1M365 546.5h1M358 547.5h1M366 547.5h1M358 548.5h9" stroke="#ff00ff" stroke-width="1" fill="none"/>
<path d="M335 594.5h1M335 595.5h1M334 596.5h1M336 596.5h1M334 597.5h1M336 597.5h1M334 598.5h1M336 598.5h1M333 599.5h1M337 599.5h1M333 600.5h1M337 600.5h1M333 601.5h1M337 601.5h1M333 602.5h1M337 602.5h1M332 603.5h1M338 603.5h1M332 604.5h1M338 604.5h1M332 605.5h1M338 605.5h1M331 606.5h1M339 606.5h1M331 607.5h9" stroke="#ff00ff" stroke-width="1" fill="none"/>
<path d="M234 587.5h1M234 588.5h1M233 589.5h1M235 589.5h1M233 590.5h1M235 590.5h1M233 591.5h1M235 591.5h1M232 592.5h1M236 592.5h1M232 593.5h1M236 593.5h1M232 594.5h1M236 594.5h1M232 595.5h1M236 595.5h1M231 596.5h1M237 596.5h1M231 597.5h1M237 597.5h1M231 598.5h1M237 598.5h1M230 599.5h1M238 599.5h1M230 600.5h9" stroke="#ff00ff" stroke-width="1" fill="none"/>
<path d="M313 554.5h1M313 555.5h1M312 556.5h1M314 556.5h1M312 557.5h1M314 557.5h1M312 558.5h1M314 558.5h1M311 559.5h1M315 559.5h1M311 560.5h1M315 560.5h1M311 561.5h1M315 561.5h1M311 562.5h1M315 562.5h1M310 563.5h1M316 563.5h1M310 564.5h1M316 564.5h1M310 565.5h1M316 565.5h1M309 566.5h1M317 566.5h1M309 567.5h9" stroke="#ff00ff" stroke-width="1" fill="none"/>
<path d="M358 526.5h9M358 527.5h1M366 527.5h1M359 528.5h1M365 528.5h1M359 529.5h1M365 529.5h1M359 530.5h1M365 530.5h1M360 531.5h1M364 531.5h1M360 532.5h1M364 532.5h1M360 533.5h1M364 533.5h1M361 534.5h1M363 534.5h1M361 535.5h1M363 535.5h1M361 536.5h1M363 536.5h1M362 537.5h1M362 538.5h1" stroke="#ff00ff" stroke-width="1" fill="none"/>
</g>
<text y="535" fill="#ff00ff" ><tspan x="222">1</tspan></text>
<text y="490" fill="#ff00ff" ><tspan x="268">2</tspan></text>
<text y="495" fill="#ff00ff" ><tspan x="322">3</tspan></text>
<text y="559" fill="#ff00ff" ><tspan x="359">4</tspan></text>
<text y="618" fill="#ff00ff" ><tspan x="332">5</tspan></text>
<text y="611" fill="#ff00ff" ><tspan x="231">6</tspan></text>
<text y="578" fill="#ff00ff" ><tspan x="310">7</tspan></text>
<text y="524" fill="#ff00ff" ><tspan x="359">8</tspan></text>
<g class="cr">
<path d="M16 673.5h1M15 674.5h1M17 674.5h1M14 675.5h1M18 675.5h1M13 676.5h1M19 676.5h1M12 677.5h1M20 677.5h1M11 678.5h1M21 678.5h1M10 679.5h1M22 679.5h1M9 680.5h15" stroke="#ff00ff" stroke-width="1" fill="none"/>
<path d="M24 673.5h1M23 674.5h1M25 674.5h1M22 675.5h1M26 675.5h1M21 676.5h1M27 676.5h1M20 677.5h1M28 677.5h1M19 678.5h1M29 678.5h1M18 679.5h1M30 679.5h1M17 680.5h15" stroke="#ff00ff" stroke-width="1" fill="none"/>
<path d="M34 673.5h1M33 674.5h1M35 674.5h1M32 675.5h1M36 675.5h1M31 676.5h1M37 676.5h1M30 677.5h1M38 677.5h1M29 678.5h1M39 678.5h1M28 679.5h1M40 679.5h1M27 680.5h15" stroke="#ff00ff" stroke-width="1" fill="none"/>
<path d="M66 673.5h1M65 674.5h1M67 674.5h1M64 675.5h1M68 675.5h1M63 676.5h1M69 676.5h1M62 677.5h1M70 677.5h1M61 678.5h1M71 678.5h1M60 679.5h1M72 679.5h1M59 680.5h15" stroke="#ff00ff" stroke-width="1" fill="none"/>
<path d="M117 673.5h1M116 674.5h1M118 674.5h1M115 675.5h1M119 675.5h1M114 676.5h1M120 676.5h1M113 677.5h1M121 677.5h1M112 678.5h1M122 678.5h1M111 679.5h1M123 679.5h1M110 680.5h15" stroke="#ff00ff" stroke-width="1" fill="none"/>
<path d="M222 673.5h1M221 674.5h1M223 674.5h1M220 675.5h1M224 675.5h1M219 676.5h1M225 676.5h1M218 677.5h1M226 677.5h1M217 678.5h1M227 678.5h1M216 679.5h1M228 679.5h1M215 680.5h15" stroke="#ff00ff" stroke-width="1" fill="none"/>
<path d="M431 673.5h1M430 674.5h1M432 674.5h1M429 675.5h1M433 675.5h1M428 676.5h1M434 676.5h1M427 677.5h1M435 677.5h1M426 678.5h1M436 678.5h1M425 679.5h1M437 679.5h1M424 680.5h15" stroke="#ff00ff" stroke-width="1" fill="none"/>
<path d="M68.5 673.5 L61.5 680.5 L75.5 680.5 Z" fill="#ff00ff" stroke="#ff00ff" stroke-width="1" stroke-linejoin="bevel"/>
</g>
<g class="cr">
<rect x="0" y="684" width="882" height="1" fill="#ececec"/>
<rect x="1" y="685" width="881" height="17" fill="#b4b4b4"/>
<rect x="0" y="702" width="885" height="1" fill="#c8c8c8"/><rect x="0" y="703" width="885" height="1" fill="#a0a0a0"/>
<rect x="0" y="704" width="1024" height="1" fill="#101010"/>
<rect x="0" y="705" width="1024" height="20" fill="#4c4c4c"/>
<rect x="0" y="705" width="1024" height="1" fill="#808080"/>
<rect x="0" y="725" width="1024" height="1" fill="#303030"/><rect x="0" y="726" width="1024" height="1" fill="#141414"/><rect x="0" y="727" width="1024" height="1" fill="#000"/>
<rect x="2" y="686" width="16" height="16" fill="#c8c8c8"/>
<rect x="2" y="686" width="16" height="1" fill="#9a9a9a"/><rect x="2" y="686" width="1" height="16" fill="#9a9a9a"/>
<rect x="2" y="701" width="16" height="1" fill="#f4f4f4"/><rect x="17" y="686" width="1" height="16" fill="#f4f4f4"/>
<rect x="798" y="687" width="44" height="14" fill="#3e3c80"/>
<rect x="797" y="686" width="45" height="1" fill="#989898"/><rect x="797" y="686" width="1" height="15" fill="#989898"/>
<rect x="797" y="701" width="46" height="1" fill="#f0f0f0"/><rect x="842" y="686" width="1" height="16" fill="#f0f0f0"/>
<rect x="845" y="687" width="24" height="14" fill="#3e3c80"/>
<rect x="844" y="686" width="25" height="1" fill="#989898"/><rect x="844" y="686" width="1" height="15" fill="#989898"/>
<rect x="844" y="701" width="26" height="1" fill="#f0f0f0"/><rect x="869" y="686" width="1" height="16" fill="#f0f0f0"/>
<rect x="872" y="687" width="9" height="14" fill="#c8c8c8"/>
<rect x="871" y="686" width="10" height="1" fill="#989898"/><rect x="871" y="686" width="1" height="15" fill="#989898"/>
<rect x="871" y="701" width="10" height="1" fill="#f0f0f0"/>
<rect x="705" y="708" width="46" height="16" fill="#3e3c80"/>
<rect x="704" y="707" width="47" height="1" fill="#1c1c1c"/><rect x="704" y="707" width="1" height="17" fill="#1c1c1c"/>
<rect x="704" y="724" width="48" height="1" fill="#8c8c8c"/><rect x="751" y="707" width="1" height="18" fill="#8c8c8c"/>
<rect x="754" y="708" width="38" height="16" fill="#4c4c4c"/>
<rect x="753" y="707" width="39" height="1" fill="#1c1c1c"/><rect x="753" y="707" width="1" height="17" fill="#1c1c1c"/>
<rect x="753" y="724" width="40" height="1" fill="#8c8c8c"/><rect x="792" y="707" width="1" height="18" fill="#8c8c8c"/>
<rect x="795" y="708" width="51" height="16" fill="#4c4c4c"/>
<rect x="794" y="707" width="52" height="1" fill="#1c1c1c"/><rect x="794" y="707" width="1" height="17" fill="#1c1c1c"/>
<rect x="794" y="724" width="53" height="1" fill="#8c8c8c"/><rect x="846" y="707" width="1" height="18" fill="#8c8c8c"/>
<rect x="849" y="708" width="30" height="16" fill="#4c4c4c"/>
<rect x="848" y="707" width="31" height="1" fill="#1c1c1c"/><rect x="848" y="707" width="1" height="17" fill="#1c1c1c"/>
<rect x="848" y="724" width="32" height="1" fill="#8c8c8c"/><rect x="879" y="707" width="1" height="18" fill="#8c8c8c"/>
<rect x="882" y="708" width="137" height="16" fill="#4c4c4c"/>
<rect x="881" y="707" width="138" height="1" fill="#1c1c1c"/><rect x="881" y="707" width="1" height="17" fill="#1c1c1c"/>
<rect x="881" y="724" width="139" height="1" fill="#8c8c8c"/><rect x="1019" y="707" width="1" height="18" fill="#8c8c8c"/>
</g>
<text class="s" x="6" y="698.5" fill="#000" style="font-size:12px">1</text>
<text class="s" x="21" y="698.5" fill="#000" style="font-size:12px" textLength="71" lengthAdjust="spacingAndGlyphs">Start 50 MHz</text>
<text class="s" x="372" y="698.5" fill="#000" style="font-size:12px" textLength="70" lengthAdjust="spacingAndGlyphs">IFBW 70 kHz</text>
<text class="s" x="722" y="698.5" fill="#000" style="font-size:12px" textLength="69" lengthAdjust="spacingAndGlyphs">Stop 20 GHz</text>
<text class="s" x="820" y="698.5" fill="#fff" style="font-size:12px" textLength="32" lengthAdjust="spacingAndGlyphs" text-anchor="middle">16/16</text>
<text class="s" x="857.2" y="698.5" fill="#fff" style="font-size:12px" textLength="17" lengthAdjust="spacingAndGlyphs" text-anchor="middle">Cor</text>
<text class="s" x="728" y="722" fill="#fff" style="font-size:16px" textLength="33" lengthAdjust="spacingAndGlyphs" text-anchor="middle">Hold</text>
<text class="s" x="773" y="722" fill="#8a8a8a" style="font-size:16px" textLength="31" lengthAdjust="spacingAndGlyphs" text-anchor="middle">Stop</text>
<text class="s" x="821" y="722" fill="#8a8a8a" style="font-size:16px" textLength="46" lengthAdjust="spacingAndGlyphs" text-anchor="middle">ExtRef</text>
<text class="s" x="864" y="722" fill="#8a8a8a" style="font-size:16px" textLength="24" lengthAdjust="spacingAndGlyphs" text-anchor="middle">Svc</text>
<text class="s" x="951" y="722" fill="#fff" style="font-size:16px" textLength="130" lengthAdjust="spacingAndGlyphs" text-anchor="middle">2021-12-27 10:13</text>
<g class="cr">
<rect x="886" y="41" width="138" height="663" fill="#4c4c4c"/>
<rect x="886" y="41" width="138" height="2" fill="#f0f0f0"/>
<rect x="886" y="43" width="138" height="33" fill="#34326a"/>
<rect x="886" y="43" width="138" height="1" fill="#8a88c8"/><rect x="886" y="43" width="1" height="33" fill="#8a88c8"/>
<rect x="886" y="75" width="138" height="1" fill="#1a1840"/><rect x="1022" y="43" width="2" height="33" fill="#1a1840"/>
<rect x="886" y="76" width="138" height="2" fill="#000"/>
<rect x="886" y="78" width="138" height="33" fill="#b2b2b2"/>
<rect x="886" y="78" width="138" height="1" fill="#f0f0f0"/><rect x="886" y="78" width="1" height="33" fill="#f0f0f0"/>
<rect x="886" y="110" width="138" height="1" fill="#6a6a6a"/><rect x="1022" y="78" width="2" height="33" fill="#6a6a6a"/>
<rect x="886" y="111" width="138" height="2" fill="#000"/>
<rect x="886" y="113" width="138" height="33" fill="#b2b2b2"/>
<rect x="886" y="113" width="138" height="1" fill="#f0f0f0"/><rect x="886" y="113" width="1" height="33" fill="#f0f0f0"/>
<rect x="886" y="145" width="138" height="1" fill="#6a6a6a"/><rect x="1022" y="113" width="2" height="33" fill="#6a6a6a"/>
<rect x="886" y="146" width="138" height="2" fill="#000"/>
<rect x="886" y="148" width="138" height="33" fill="#b2b2b2"/>
<rect x="886" y="148" width="138" height="1" fill="#f0f0f0"/><rect x="886" y="148" width="1" height="33" fill="#f0f0f0"/>
<rect x="886" y="180" width="138" height="1" fill="#6a6a6a"/><rect x="1022" y="148" width="2" height="33" fill="#6a6a6a"/>
<rect x="886" y="181" width="138" height="2" fill="#000"/>
<rect x="886" y="183" width="138" height="33" fill="#b2b2b2"/>
<rect x="886" y="183" width="138" height="1" fill="#f0f0f0"/><rect x="886" y="183" width="1" height="33" fill="#f0f0f0"/>
<rect x="886" y="215" width="138" height="1" fill="#6a6a6a"/><rect x="1022" y="183" width="2" height="33" fill="#6a6a6a"/>
<rect x="886" y="216" width="138" height="2" fill="#000"/>
<rect x="886" y="218" width="138" height="33" fill="#b2b2b2"/>
<rect x="886" y="218" width="138" height="1" fill="#f0f0f0"/><rect x="886" y="218" width="1" height="33" fill="#f0f0f0"/>
<rect x="886" y="250" width="138" height="1" fill="#6a6a6a"/><rect x="1022" y="218" width="2" height="33" fill="#6a6a6a"/>
<rect x="886" y="251" width="138" height="2" fill="#000"/>
<rect x="886" y="253" width="138" height="31" fill="#4a4a4a"/>
<rect x="886" y="253" width="138" height="1" fill="#5c5c5c"/><rect x="886" y="253" width="1" height="31" fill="#5c5c5c"/>
<rect x="886" y="283" width="138" height="1" fill="#2a2a2a"/><rect x="1022" y="253" width="2" height="31" fill="#2a2a2a"/>
<rect x="886" y="284" width="138" height="2" fill="#000"/>
<rect x="886" y="286" width="138" height="1" fill="#8886c8"/><rect x="886" y="287" width="138" height="2" fill="#100e38"/>
<rect x="886" y="290" width="138" height="31" fill="#b2b2b2"/>
<rect x="886" y="290" width="138" height="1" fill="#f0f0f0"/><rect x="886" y="290" width="1" height="31" fill="#f0f0f0"/>
<rect x="886" y="320" width="138" height="1" fill="#6a6a6a"/><rect x="1022" y="290" width="2" height="31" fill="#6a6a6a"/>
<rect x="886" y="321" width="138" height="2" fill="#000"/>
<rect x="886" y="323" width="138" height="1" fill="#1c1c1c"/>
<rect x="886" y="324" width="137" height="379" fill="#4c4c4c"/>
<rect x="1023" y="324" width="1" height="380" fill="#888"/>
<rect x="886" y="703" width="138" height="1" fill="#888"/>
</g>
<text class="s" x="955" y="65" fill="#fff" style="font-size:13px" text-anchor="middle">S2P</text>
<text class="s" x="955" y="99" fill="#000" style="font-size:13px" textLength="48" lengthAdjust="spacingAndGlyphs" text-anchor="middle">[ 1-2 ]...</text>
<text class="s" x="955" y="134" fill="#000" style="font-size:13px" textLength="48" lengthAdjust="spacingAndGlyphs" text-anchor="middle">[ 1-3 ]...</text>
<text class="s" x="955" y="169" fill="#000" style="font-size:13px" textLength="48" lengthAdjust="spacingAndGlyphs" text-anchor="middle">[ 1-4 ]...</text>
<text class="s" x="955" y="204" fill="#000" style="font-size:13px" textLength="48" lengthAdjust="spacingAndGlyphs" text-anchor="middle">[ 2-3 ]...</text>
<text class="s" x="955" y="239" fill="#000" style="font-size:13px" textLength="48" lengthAdjust="spacingAndGlyphs" text-anchor="middle">[ 2-4 ]...</text>
<text class="s" x="955" y="274" fill="#fff" style="font-size:13px" textLength="48" lengthAdjust="spacingAndGlyphs" text-anchor="middle">[ 3-4 ]...</text>
<text class="s" x="955" y="310" fill="#000" style="font-size:13px" text-anchor="middle">Return</text>
</svg></body></html>
